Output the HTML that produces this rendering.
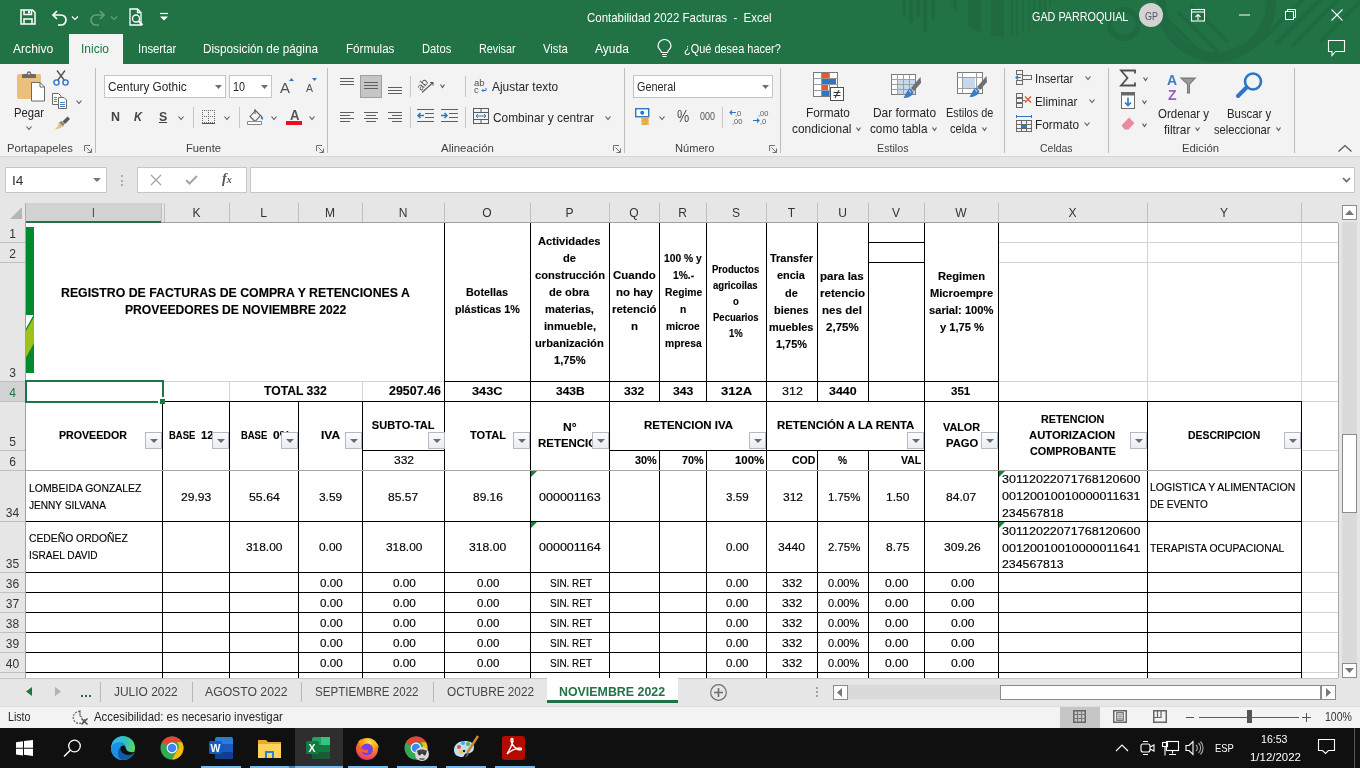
<!DOCTYPE html><html><head><meta charset="utf-8"><style>
html,body{margin:0;padding:0;} body{width:1360px;height:768px;position:relative;overflow:hidden;background:#fff;font-family:"Liberation Sans", sans-serif;}
div{box-sizing:border-box;} #root{position:absolute;left:0;top:0;width:1360px;height:768px;overflow:hidden;will-change:transform;}  svg{position:absolute;overflow:visible;}
</style></head><body><div id="root">
<div style="position:absolute;left:0px;top:0px;width:1360px;height:64px;background:#217346;"></div>
<svg style="left:0px;top:0px" width="1360" height="64" viewBox="0 0 1360 64"><defs><clipPath id="tb"><rect x="0" y="0" width="1360" height="64"/></clipPath></defs><g clip-path="url(#tb)"><g fill="#1f6a40"><rect x="902" y="0" width="4" height="15.6"/><rect x="909" y="0" width="4" height="23"/><rect x="916" y="0" width="4" height="17"/><rect x="923" y="0" width="4" height="32"/><rect x="931" y="0" width="4" height="20"/><rect x="1011" y="0" width="2" height="35.6"/><rect x="1016" y="0" width="2" height="34.4"/><rect x="1022" y="0" width="2" height="32"/><rect x="1028" y="0" width="2" height="29.4"/><rect x="1033" y="0" width="2" height="25.6"/><rect x="1039" y="0" width="2" height="21"/><rect x="1044" y="0" width="2" height="16"/><rect x="1049" y="0" width="2" height="6"/><path d="M950 0h7v13z"/><path d="M968 0h13v33l-13-7.5z"/><path d="M991 0h13v37l-13-1z"/></g><circle cx="1124" cy="24" r="14" fill="none" stroke="#1f6a40" stroke-width="6"/><circle cx="1216" cy="2" r="55" fill="none" stroke="#1f6a40" stroke-width="10"/><g stroke="#1f6a40" stroke-width="3.5"><path d="M1178 12l40 40M1170 22l36 36M1190 4l38 38"/></g><g stroke="#1f6a40" stroke-width="4"><path d="M1262 40L1310 -8M1276 44L1330 -10M1292 46L1350 -12M1320 42L1372 -10"/></g></g></svg>
<svg style="left:20px;top:9px" width="16" height="16" viewBox="0 0 16 16"><g fill="none" stroke="#fff" stroke-width="1.5"><path d="M1 1h11.5l2.5 2.5V15H1z"/><path d="M4 1v4.5h7.5V1"/><path d="M4 15v-5h8v5"/></g><rect x="8" y="2" width="2" height="2.5" fill="#fff"/></svg>
<svg style="left:50px;top:9px" width="30" height="16" viewBox="0 0 30 16"><g fill="none" stroke="#fff" stroke-width="1.7"><path d="M3 6h8a5 5 0 0 1 0 10H8"/><path d="M7 2L3 6l4 4"/></g><path d="M22 7.5l3 3 3-3" fill="none" stroke="#fff" stroke-width="1.1"/></svg>
<svg style="left:89px;top:9px" width="30" height="16" viewBox="0 0 30 16"><g fill="none" stroke="#64a07c" stroke-width="1.7"><path d="M15 6H7a5 5 0 0 0 0 10h3"/><path d="M11 2l4 4-4 4"/></g><path d="M22 7.5l3 3 3-3" fill="none" stroke="#64a07c" stroke-width="1.1"/></svg>
<svg style="left:129px;top:8px" width="18" height="18" viewBox="0 0 18 18"><g fill="none" stroke="#fff" stroke-width="1.3"><path d="M1 1h7.5l3.5 3.5V17H1z"/><path d="M8.5 1v3.5H12"/><circle cx="7" cy="10.5" r="3.5"/><path d="M9.5 13l4 4" stroke-width="2"/></g></svg>
<svg style="left:160px;top:12px" width="8" height="10" viewBox="0 0 8 10"><path d="M0 1.5h8" stroke="#fff" stroke-width="1.2"/><path d="M0 4.5h8l-4 4z" fill="#fff"/></svg>
<div style="position:absolute;left:586.70px;top:11.84px;font-size:12.35px;line-height:12.35px;font-weight:normal;font-style:normal;color:#ffffff;white-space:nowrap;transform-origin:0 0;transform:scaleX(0.9279);">Contabilidad 2022 Facturas  -  Excel</div>
<div style="position:absolute;left:1031.50px;top:10.79px;font-size:12.06px;line-height:12.06px;font-weight:normal;font-style:normal;color:#ffffff;white-space:nowrap;transform-origin:0 0;transform:scaleX(0.8960);">GAD PARROQUIAL</div>
<div style="position:absolute;left:1139px;top:3px;width:24px;height:24px;border-radius:50%;background:#d3d3d3;"></div>
<div style="position:absolute;left:1145.00px;top:10.90px;font-size:11.34px;line-height:11.34px;font-weight:normal;font-style:normal;color:#555;white-space:nowrap;transform-origin:0 0;transform:scaleX(0.7935);">GP</div>
<svg style="left:1191px;top:9px" width="14" height="13" viewBox="0 0 14 13"><g fill="none" stroke="#fff" stroke-width="1.1"><rect x="0.5" y="0.5" width="13" height="11.5"/><path d="M0.5 3h13"/><path d="M7 11V5.5M4.5 8L7 5.5 9.5 8"/></g></svg>
<svg style="left:1239px;top:14px" width="12" height="2" viewBox="0 0 12 2"><path d="M0 1h11" stroke="#fff" stroke-width="1"/></svg>
<svg style="left:1285px;top:9px" width="11" height="11" viewBox="0 0 11 11"><g fill="none" stroke="#fff" stroke-width="1"><rect x="0.5" y="2.5" width="8" height="8"/><path d="M2.5 2.5V0.5h8v8h-2"/></g></svg>
<svg style="left:1331px;top:9px" width="12" height="12" viewBox="0 0 12 12"><path d="M0.5 0.5l11 11M11.5 0.5l-11 11" stroke="#fff" stroke-width="1.1"/></svg>
<div style="position:absolute;left:69px;top:34px;width:54px;height:30px;background:#f3f3f3;"></div>
<div style="position:absolute;left:13.00px;top:43.22px;font-size:12.50px;line-height:12.50px;font-weight:normal;font-style:normal;color:#ffffff;white-space:nowrap;transform-origin:0 0;transform:scaleX(0.9667);">Archivo</div>
<div style="position:absolute;left:81.30px;top:43.22px;font-size:12.50px;line-height:12.50px;font-weight:normal;font-style:normal;color:#217346;white-space:nowrap;transform-origin:0 0;transform:scaleX(0.9593);">Inicio</div>
<div style="position:absolute;left:137.50px;top:43.22px;font-size:12.50px;line-height:12.50px;font-weight:normal;font-style:normal;color:#ffffff;white-space:nowrap;transform-origin:0 0;transform:scaleX(0.9038);">Insertar</div>
<div style="position:absolute;left:203.30px;top:43.22px;font-size:12.50px;line-height:12.50px;font-weight:normal;font-style:normal;color:#ffffff;white-space:nowrap;transform-origin:0 0;transform:scaleX(0.9402);">Disposición de página</div>
<div style="position:absolute;left:346.20px;top:43.22px;font-size:12.50px;line-height:12.50px;font-weight:normal;font-style:normal;color:#ffffff;white-space:nowrap;transform-origin:0 0;transform:scaleX(0.9291);">Fórmulas</div>
<div style="position:absolute;left:422.30px;top:43.22px;font-size:12.50px;line-height:12.50px;font-weight:normal;font-style:normal;color:#ffffff;white-space:nowrap;transform-origin:0 0;transform:scaleX(0.8972);">Datos</div>
<div style="position:absolute;left:479.30px;top:43.22px;font-size:12.50px;line-height:12.50px;font-weight:normal;font-style:normal;color:#ffffff;white-space:nowrap;transform-origin:0 0;transform:scaleX(0.8637);">Revisar</div>
<div style="position:absolute;left:542.50px;top:43.22px;font-size:12.50px;line-height:12.50px;font-weight:normal;font-style:normal;color:#ffffff;white-space:nowrap;transform-origin:0 0;transform:scaleX(0.9024);">Vista</div>
<div style="position:absolute;left:595.00px;top:43.22px;font-size:12.50px;line-height:12.50px;font-weight:normal;font-style:normal;color:#ffffff;white-space:nowrap;transform-origin:0 0;transform:scaleX(0.9617);">Ayuda</div>
<div style="position:absolute;left:684.20px;top:43.22px;font-size:12.50px;line-height:12.50px;font-weight:normal;font-style:normal;color:#ffffff;white-space:nowrap;transform-origin:0 0;transform:scaleX(0.8760);">¿Qué desea hacer?</div>
<svg style="left:657px;top:41px" width="15" height="16" viewBox="0 0 15 16"><g fill="none" stroke="#fff" stroke-width="1.2"><path d="M4.5 11.5c0-2-3.5-3.5-3.5-6.5a6.5 6.5 0 0 1 13 0c0 3-3.5 4.5-3.5 6.5z"/><path d="M5 13.5h5M5.5 15.5h4"/></g></svg>
<svg style="left:1328px;top:40px" width="18" height="17" viewBox="0 0 18 17"><path d="M0.5 0.5h16v11H7.5l-3.5 4v-4H0.5z" fill="none" stroke="#fff" stroke-width="1.1"/></svg>
<div style="position:absolute;left:0px;top:64px;width:1360px;height:92px;background:#f3f3f3;"></div>
<div style="position:absolute;left:0px;top:156px;width:1360px;height:1px;background:#d6d6d6;"></div>
<div style="position:absolute;left:95px;top:68px;width:1px;height:85px;background:#bcbcbc;"></div>
<div style="position:absolute;left:327px;top:68px;width:1px;height:85px;background:#bcbcbc;"></div>
<div style="position:absolute;left:624px;top:68px;width:1px;height:85px;background:#bcbcbc;"></div>
<div style="position:absolute;left:780px;top:68px;width:1px;height:85px;background:#bcbcbc;"></div>
<div style="position:absolute;left:1004px;top:68px;width:1px;height:85px;background:#bcbcbc;"></div>
<div style="position:absolute;left:1108px;top:68px;width:1px;height:85px;background:#bcbcbc;"></div>
<div style="position:absolute;left:1294px;top:68px;width:1px;height:85px;background:#bcbcbc;"></div>
<div style="position:absolute;left:6.75px;top:142.46px;font-size:11.63px;line-height:11.63px;font-weight:normal;font-style:normal;color:#404040;white-space:nowrap;transform-origin:0 0;transform:scaleX(0.9596);">Portapapeles</div>
<div style="position:absolute;left:185.50px;top:142.46px;font-size:11.63px;line-height:11.63px;font-weight:normal;font-style:normal;color:#404040;white-space:nowrap;transform-origin:0 0;transform:scaleX(0.9671);">Fuente</div>
<div style="position:absolute;left:441.20px;top:142.46px;font-size:11.63px;line-height:11.63px;font-weight:normal;font-style:normal;color:#404040;white-space:nowrap;transform-origin:0 0;transform:scaleX(0.9858);">Alineación</div>
<div style="position:absolute;left:674.50px;top:142.46px;font-size:11.63px;line-height:11.63px;font-weight:normal;font-style:normal;color:#404040;white-space:nowrap;transform-origin:0 0;transform:scaleX(0.9549);">Número</div>
<div style="position:absolute;left:876.70px;top:142.46px;font-size:11.63px;line-height:11.63px;font-weight:normal;font-style:normal;color:#404040;white-space:nowrap;transform-origin:0 0;transform:scaleX(0.9199);">Estilos</div>
<div style="position:absolute;left:1039.70px;top:142.46px;font-size:11.63px;line-height:11.63px;font-weight:normal;font-style:normal;color:#404040;white-space:nowrap;transform-origin:0 0;transform:scaleX(0.9008);">Celdas</div>
<div style="position:absolute;left:1182.10px;top:142.46px;font-size:11.63px;line-height:11.63px;font-weight:normal;font-style:normal;color:#404040;white-space:nowrap;transform-origin:0 0;transform:scaleX(0.9727);">Edición</div>
<svg style="left:84px;top:145px" width="8" height="8" viewBox="0 0 8 8"><g fill="none" stroke="#707070" stroke-width="1"><path d="M0.5 6V0.5H6"/><path d="M2.5 2.5l5 5M7.5 3.5v4h-4"/></g></svg>
<svg style="left:316px;top:145px" width="8" height="8" viewBox="0 0 8 8"><g fill="none" stroke="#707070" stroke-width="1"><path d="M0.5 6V0.5H6"/><path d="M2.5 2.5l5 5M7.5 3.5v4h-4"/></g></svg>
<svg style="left:613px;top:145px" width="8" height="8" viewBox="0 0 8 8"><g fill="none" stroke="#707070" stroke-width="1"><path d="M0.5 6V0.5H6"/><path d="M2.5 2.5l5 5M7.5 3.5v4h-4"/></g></svg>
<svg style="left:769px;top:145px" width="8" height="8" viewBox="0 0 8 8"><g fill="none" stroke="#707070" stroke-width="1"><path d="M0.5 6V0.5H6"/><path d="M2.5 2.5l5 5M7.5 3.5v4h-4"/></g></svg>
<svg style="left:17px;top:71px" width="30" height="31" viewBox="0 0 30 31"><rect x="0" y="3" width="24" height="25" rx="2" fill="#eac07a"/><path d="M5 4.5c0-1 .5-1.5 1.5-1.5h11c1 0 1.5 .5 1.5 1.5V7H5z" fill="#6a6a6a"/><circle cx="12" cy="2.5" r="2.2" fill="#6a6a6a"/><circle cx="12" cy="2.7" r="0.9" fill="#fff"/><path d="M14.5 11.5h8.5l4.5 4.5v14h-13z" fill="#fff" stroke="#6a6a6a" stroke-width="1"/><path d="M23 11.5v4.5h4.5" fill="none" stroke="#6a6a6a" stroke-width="1"/></svg>
<div style="position:absolute;left:14.25px;top:107.29px;font-size:12.06px;line-height:12.06px;font-weight:normal;font-style:normal;color:#262626;white-space:nowrap;transform-origin:0 0;transform:scaleX(0.9322);">Pegar</div>
<svg style="left:26px;top:126px" width="6" height="4" viewBox="0 0 6 4"><path d="M0.5 0.5l2.5 3l2.5 -3" fill="none" stroke="#555" stroke-width="1.1"/></svg>
<svg style="left:53px;top:70px" width="16" height="16" viewBox="0 0 16 16"><g fill="none" stroke="#505050" stroke-width="1.3"><path d="M4 0.5l7.5 10M12 0.5L4.5 10.5"/></g><g fill="none" stroke="#2b77c6" stroke-width="1.4"><circle cx="3.5" cy="12.5" r="2.6"/><circle cx="12.5" cy="12.5" r="2.6"/></g></svg>
<svg style="left:52px;top:93px" width="17" height="16" viewBox="0 0 17 16"><g fill="#fff" stroke="#6a6a6a" stroke-width="1"><path d="M0.5 0.5h6l2.5 2.5v8.5h-8.5z"/><path d="M6.5 4.5h5.5l2.5 2.5v8.5h-8z"/></g><path d="M2 4.5h3M2 6.5h3M2 8.5h3M8 9.5h5M8 11.5h5M8 13.5h5" stroke="#2b77c6" stroke-width="0.9"/></svg>
<svg style="left:76px;top:100px" width="6" height="4" viewBox="0 0 6 4"><path d="M0.5 0.5l2.5 3l2.5 -3" fill="none" stroke="#555" stroke-width="1.1"/></svg>
<svg style="left:53px;top:116px" width="17" height="15" viewBox="0 0 17 15"><path d="M9.5 5.5l5-5 2.5 2.5-5 5z" fill="#5a5a5a"/><path d="M1 13.5c3-1 4-4 5-7l4 4c-2 1-5 3-9 3z" fill="#e9c27d"/><path d="M6 6.5l2.5-1.5 3 3-1.5 2.5z" fill="#888"/></svg>
<div style="position:absolute;left:104px;top:75px;width:122px;height:23px;background:#fff;border:1px solid #c4c4c4;"></div>
<div style="position:absolute;left:107.50px;top:81.29px;font-size:12.35px;line-height:12.35px;font-weight:normal;font-style:normal;color:#262626;white-space:nowrap;transform-origin:0 0;transform:scaleX(0.9556);">Century Gothic</div>
<svg style="left:215px;top:85px" width="7" height="4" viewBox="0 0 7 4"><path d="M0 0h7L3.5 4z" fill="#6f6f6f"/></svg>
<div style="position:absolute;left:229px;top:75px;width:43px;height:23px;background:#fff;border:1px solid #c4c4c4;"></div>
<div style="position:absolute;left:232.50px;top:81.29px;font-size:12.35px;line-height:12.35px;font-weight:normal;font-style:normal;color:#262626;white-space:nowrap;transform-origin:0 0;transform:scaleX(0.8731);">10</div>
<svg style="left:261px;top:85px" width="7" height="4" viewBox="0 0 7 4"><path d="M0 0h7L3.5 4z" fill="#6f6f6f"/></svg>
<div style="position:absolute;left:280.00px;top:79.58px;font-size:15.26px;line-height:15.26px;font-weight:normal;font-style:normal;color:#505050;white-space:nowrap;transform-origin:0 0;transform:scaleX(0.9816);">A</div>
<svg style="left:289px;top:78px" width="5" height="3" viewBox="0 0 5 3"><path d="M0 3h5L2.5 0z" fill="#2b77c6"/></svg>
<div style="position:absolute;left:305.50px;top:83.27px;font-size:10.90px;line-height:10.90px;font-weight:normal;font-style:normal;color:#505050;white-space:nowrap;transform-origin:0 0;transform:scaleX(0.9620);">A</div>
<svg style="left:312px;top:78px" width="5" height="3" viewBox="0 0 5 3"><path d="M0 0h5L2.5 3z" fill="#2b77c6"/></svg>
<div style="position:absolute;left:110.50px;top:110.98px;font-size:12.72px;line-height:12.72px;font-weight:bold;font-style:normal;color:#444;white-space:nowrap;transform-origin:0 0;transform:scaleX(0.9795);">N</div>
<div style="position:absolute;left:133.75px;top:110.98px;font-size:12.72px;line-height:12.72px;font-weight:bold;font-style:italic;color:#444;white-space:nowrap;transform-origin:0 0;transform:scaleX(0.8764);">K</div>
<div style="position:absolute;left:158.75px;top:110.98px;font-size:12.72px;line-height:12.72px;font-weight:bold;font-style:normal;color:#444;white-space:nowrap;transform-origin:0 0;transform:scaleX(0.9718);">S</div>
<div style="position:absolute;left:159px;top:122px;width:8px;height:1px;background:#444;"></div>
<svg style="left:178px;top:116px" width="6" height="4" viewBox="0 0 6 4"><path d="M0.5 0.5l2.5 3l2.5 -3" fill="none" stroke="#555" stroke-width="1.1"/></svg>
<div style="position:absolute;left:193px;top:107px;width:1px;height:21px;background:#c8c8c8;"></div>
<svg style="left:202px;top:110px" width="14" height="14" viewBox="0 0 14 14"><g fill="#666"><rect x="0" y="0" width="1" height="1"/><rect x="2" y="0" width="1" height="1"/><rect x="4" y="0" width="1" height="1"/><rect x="6" y="0" width="1" height="1"/><rect x="8" y="0" width="1" height="1"/><rect x="10" y="0" width="1" height="1"/><rect x="12" y="0" width="1" height="1"/><rect x="0" y="6" width="1" height="1"/><rect x="2" y="6" width="1" height="1"/><rect x="4" y="6" width="1" height="1"/><rect x="6" y="6" width="1" height="1"/><rect x="8" y="6" width="1" height="1"/><rect x="10" y="6" width="1" height="1"/><rect x="12" y="6" width="1" height="1"/><rect x="0" y="12" width="1" height="1"/><rect x="2" y="12" width="1" height="1"/><rect x="4" y="12" width="1" height="1"/><rect x="6" y="12" width="1" height="1"/><rect x="8" y="12" width="1" height="1"/><rect x="10" y="12" width="1" height="1"/><rect x="12" y="12" width="1" height="1"/><rect x="0" y="2" width="1" height="1"/><rect x="0" y="4" width="1" height="1"/><rect x="0" y="6" width="1" height="1"/><rect x="0" y="8" width="1" height="1"/><rect x="0" y="10" width="1" height="1"/><rect x="6" y="2" width="1" height="1"/><rect x="6" y="4" width="1" height="1"/><rect x="6" y="6" width="1" height="1"/><rect x="6" y="8" width="1" height="1"/><rect x="6" y="10" width="1" height="1"/><rect x="12" y="2" width="1" height="1"/><rect x="12" y="4" width="1" height="1"/><rect x="12" y="6" width="1" height="1"/><rect x="12" y="8" width="1" height="1"/><rect x="12" y="10" width="1" height="1"/></g><rect x="0" y="13" width="13" height="1" fill="#555"/></svg>
<svg style="left:224px;top:116px" width="6" height="4" viewBox="0 0 6 4"><path d="M0.5 0.5l2.5 3l2.5 -3" fill="none" stroke="#555" stroke-width="1.1"/></svg>
<div style="position:absolute;left:239px;top:107px;width:1px;height:21px;background:#c8c8c8;"></div>
<svg style="left:247px;top:108px" width="17" height="17" viewBox="0 0 17 17"><g fill="none" stroke="#5a5a5a" stroke-width="1.1"><path d="M3 8.5l5.5-6 5 5-5.5 6z"/><path d="M8 1v5"/></g><path d="M0.5 13.5h14v3h-14z" fill="#fff" stroke="#888"/><path d="M14 7c1.5 1.5 2.5 3 2 4.5-1.5 .5-2.5-.5-2-4.5z" fill="#2b77c6"/></svg>
<svg style="left:271px;top:116px" width="6" height="4" viewBox="0 0 6 4"><path d="M0.5 0.5l2.5 3l2.5 -3" fill="none" stroke="#555" stroke-width="1.1"/></svg>
<div style="position:absolute;left:289.50px;top:109.31px;font-size:13.81px;line-height:13.81px;font-weight:bold;font-style:normal;color:#555;white-space:nowrap;transform-origin:0 0;transform:scaleX(0.9522);">A</div>
<div style="position:absolute;left:286px;top:121px;width:16px;height:4px;background:#e81123;"></div>
<svg style="left:309px;top:116px" width="6" height="4" viewBox="0 0 6 4"><path d="M0.5 0.5l2.5 3l2.5 -3" fill="none" stroke="#555" stroke-width="1.1"/></svg>
<div style="position:absolute;left:340px;top:78px;width:14px;height:1px;background:#5f5f5f;"></div>
<div style="position:absolute;left:340px;top:81px;width:14px;height:1px;background:#5f5f5f;"></div>
<div style="position:absolute;left:340px;top:84px;width:14px;height:1px;background:#5f5f5f;"></div>
<div style="position:absolute;left:360px;top:75px;width:22px;height:23px;background:#c5c5c5;border:1px solid #a0a0a0;"></div>
<div style="position:absolute;left:364px;top:82px;width:14px;height:1px;background:#5f5f5f;"></div>
<div style="position:absolute;left:364px;top:85px;width:14px;height:1px;background:#5f5f5f;"></div>
<div style="position:absolute;left:364px;top:88px;width:14px;height:1px;background:#5f5f5f;"></div>
<div style="position:absolute;left:388px;top:87px;width:14px;height:1px;background:#5f5f5f;"></div>
<div style="position:absolute;left:388px;top:90px;width:14px;height:1px;background:#5f5f5f;"></div>
<div style="position:absolute;left:388px;top:93px;width:14px;height:1px;background:#5f5f5f;"></div>
<div style="position:absolute;left:410px;top:76px;width:1px;height:21px;background:#c8c8c8;"></div>
<svg style="left:417px;top:78px" width="18" height="15" viewBox="0 0 18 15"><text x="-1" y="10" font-size="10.5" fill="#505050" font-family="Liberation Sans" transform="rotate(-50 5 6)">ab</text><path d="M5 14.5l11-10M13 4.5h3v3" fill="none" stroke="#5a5a5a" stroke-width="1.1"/></svg>
<svg style="left:440px;top:84px" width="5" height="4" viewBox="0 0 5 4"><path d="M0.5 0.5l2.0 3l2.0 -3" fill="none" stroke="#555" stroke-width="1.1"/></svg>
<div style="position:absolute;left:465px;top:76px;width:1px;height:21px;background:#c8c8c8;"></div>
<svg style="left:474px;top:79px" width="14" height="14" viewBox="0 0 14 14"><text x="0" y="7" font-size="9.5" fill="#505050" font-family="Liberation Sans">ab</text><text x="0" y="14" font-size="9.5" fill="#505050" font-family="Liberation Sans">c</text><path d="M12 9v2.5H8M9.5 10L8 11.5l1.5 1.5" fill="none" stroke="#2b77c6" stroke-width="1"/></svg>
<div style="position:absolute;left:492.20px;top:81.04px;font-size:12.35px;line-height:12.35px;font-weight:normal;font-style:normal;color:#262626;white-space:nowrap;transform-origin:0 0;transform:scaleX(0.9642);">Ajustar texto</div>
<div style="position:absolute;left:340px;top:112px;width:14px;height:1px;background:#5f5f5f;"></div>
<div style="position:absolute;left:340px;top:115px;width:10px;height:1px;background:#5f5f5f;"></div>
<div style="position:absolute;left:340px;top:118px;width:14px;height:1px;background:#5f5f5f;"></div>
<div style="position:absolute;left:340px;top:121px;width:10px;height:1px;background:#5f5f5f;"></div>
<div style="position:absolute;left:364px;top:112px;width:14px;height:1px;background:#5f5f5f;"></div>
<div style="position:absolute;left:366px;top:115px;width:10px;height:1px;background:#5f5f5f;"></div>
<div style="position:absolute;left:364px;top:118px;width:14px;height:1px;background:#5f5f5f;"></div>
<div style="position:absolute;left:366px;top:121px;width:10px;height:1px;background:#5f5f5f;"></div>
<div style="position:absolute;left:388px;top:112px;width:14px;height:1px;background:#5f5f5f;"></div>
<div style="position:absolute;left:392px;top:115px;width:10px;height:1px;background:#5f5f5f;"></div>
<div style="position:absolute;left:388px;top:118px;width:14px;height:1px;background:#5f5f5f;"></div>
<div style="position:absolute;left:392px;top:121px;width:10px;height:1px;background:#5f5f5f;"></div>
<div style="position:absolute;left:410px;top:107px;width:1px;height:21px;background:#c8c8c8;"></div>
<svg style="left:417px;top:109px" width="18" height="14" viewBox="0 0 18 14"><path d="M0 0.5h17M8 4.5h9M8 8.5h9M0 12.5h17" stroke="#5f5f5f" stroke-width="1"/><path d="M1 6.5h6M3.5 4L1 6.5 3.5 9" fill="none" stroke="#2b77c6" stroke-width="1.5"/></svg>
<svg style="left:441px;top:109px" width="18" height="14" viewBox="0 0 18 14"><path d="M0 0.5h17M8 4.5h9M8 8.5h9M0 12.5h17" stroke="#5f5f5f" stroke-width="1"/><path d="M0 6.5h6M3.5 4L6 6.5 3.5 9" fill="none" stroke="#2b77c6" stroke-width="1.5"/></svg>
<div style="position:absolute;left:465px;top:107px;width:1px;height:21px;background:#c8c8c8;"></div>
<svg style="left:473px;top:108px" width="16" height="16" viewBox="0 0 16 16"><g fill="none" stroke="#5a5a5a" stroke-width="1"><rect x="0.5" y="0.5" width="15" height="15"/><path d="M0.5 4.5h15M0.5 11.5h15M8 0.5v4M8 11.5v4"/></g><path d="M3 8h10M5 6L3 8l2 2M11 6l2 2-2 2" fill="none" stroke="#2b77c6" stroke-width="1"/></svg>
<div style="position:absolute;left:493.00px;top:112.04px;font-size:12.35px;line-height:12.35px;font-weight:normal;font-style:normal;color:#262626;white-space:nowrap;transform-origin:0 0;transform:scaleX(0.9624);">Combinar y centrar</div>
<svg style="left:605px;top:116px" width="6" height="4" viewBox="0 0 6 4"><path d="M0.5 0.5l2.5 3l2.5 -3" fill="none" stroke="#555" stroke-width="1.1"/></svg>
<div style="position:absolute;left:633px;top:75px;width:140px;height:23px;background:#fff;border:1px solid #c4c4c4;"></div>
<div style="position:absolute;left:636.60px;top:81.34px;font-size:12.35px;line-height:12.35px;font-weight:normal;font-style:normal;color:#262626;white-space:nowrap;transform-origin:0 0;transform:scaleX(0.8805);">General</div>
<svg style="left:762px;top:85px" width="7" height="4" viewBox="0 0 7 4"><path d="M0 0h7L3.5 4z" fill="#6f6f6f"/></svg>
<svg style="left:635px;top:108px" width="18" height="17" viewBox="0 0 18 17"><rect x="0.7" y="0.7" width="13" height="8" fill="#fff" stroke="#2b77c6" stroke-width="1.4"/><circle cx="7.2" cy="4.7" r="2" fill="#2b77c6"/><g fill="#e6ab45"><ellipse cx="10" cy="10.5" rx="4" ry="1.6"/><ellipse cx="10" cy="13" rx="4" ry="1.6"/><ellipse cx="10" cy="15.5" rx="4" ry="1.6"/></g></svg>
<svg style="left:659px;top:116px" width="6" height="4" viewBox="0 0 6 4"><path d="M0.5 0.5l2.5 3l2.5 -3" fill="none" stroke="#555" stroke-width="1.1"/></svg>
<div style="position:absolute;left:677.40px;top:109.35px;font-size:16.72px;line-height:16.72px;font-weight:normal;font-style:normal;color:#505050;white-space:nowrap;transform-origin:0 0;transform:scaleX(0.8268);">%</div>
<div style="position:absolute;left:699.70px;top:112.09px;font-size:10.17px;line-height:10.17px;font-weight:normal;font-style:normal;color:#505050;white-space:nowrap;transform-origin:0 0;transform:scaleX(0.8782);">000</div>
<div style="position:absolute;left:722px;top:107px;width:1px;height:21px;background:#c8c8c8;"></div>
<svg style="left:729px;top:109px" width="16" height="15" viewBox="0 0 16 15"><text x="6" y="6.5" font-size="7.5" fill="#5a5a5a" font-family="Liberation Sans">,0</text><text x="3" y="14.5" font-size="7.5" fill="#5a5a5a" font-family="Liberation Sans">,00</text><path d="M7 3.5H1M3 1.5l-2 2 2 2" fill="none" stroke="#2b77c6" stroke-width="1.1"/></svg>
<svg style="left:753px;top:109px" width="16" height="15" viewBox="0 0 16 15"><text x="5" y="6.5" font-size="7.5" fill="#5a5a5a" font-family="Liberation Sans">,00</text><text x="7" y="14.5" font-size="7.5" fill="#5a5a5a" font-family="Liberation Sans">,0</text><path d="M0 11.5h6M4 9.5l2 2-2 2" fill="none" stroke="#2b77c6" stroke-width="1.1"/></svg>
<svg style="left:813px;top:72px" width="32" height="30" viewBox="0 0 32 30"><rect x="0.5" y="0.5" width="24" height="24" fill="#fff" stroke="#7a7a7a"/><path d="M0.5 6.5h24M0.5 12.5h24M0.5 18.5h24M8.5 0.5v24M16.5 0.5v24" stroke="#9a9a9a" stroke-width="1"/><rect x="9" y="1" width="7" height="5" fill="#e35a2c"/><rect x="9" y="7" width="14" height="5" fill="#2b77c6"/><rect x="9" y="13" width="6" height="5" fill="#e35a2c"/><rect x="9" y="19" width="7" height="5" fill="#2b77c6"/><rect x="17.5" y="15.5" width="13" height="13" fill="#fff" stroke="#505050"/><path d="M20.5 20.5h7M20.5 23.5h7M26 18l-4 8" stroke="#333" stroke-width="1.1"/></svg>
<div style="position:absolute;left:805.50px;top:107.34px;font-size:12.35px;line-height:12.35px;font-weight:normal;font-style:normal;color:#262626;white-space:nowrap;transform-origin:0 0;transform:scaleX(0.9546);">Formato</div>
<div style="position:absolute;left:791.50px;top:123.14px;font-size:12.35px;line-height:12.35px;font-weight:normal;font-style:normal;color:#262626;white-space:nowrap;transform-origin:0 0;transform:scaleX(0.9627);">condicional</div>
<svg style="left:856px;top:127px" width="5" height="4" viewBox="0 0 5 4"><path d="M0.5 0.5l2.0 3l2.0 -3" fill="none" stroke="#555" stroke-width="1.1"/></svg>
<svg style="left:891px;top:73px" width="31" height="29" viewBox="0 0 31 29"><rect x="0.5" y="1.5" width="24" height="20" fill="#fff" stroke="#7a7a7a"/><rect x="7" y="7" width="17" height="14" fill="#c5d8ee"/><path d="M0.5 6.5h24M0.5 11.5h24M0.5 16.5h24M6.5 1.5v20M12.5 1.5v20M18.5 1.5v20" stroke="#a0a0a0" stroke-width="1"/><path d="M29.5 4l0.5 6-7 8-3-3z" fill="#707070"/><path d="M19 15.5l3.5 3.5c-1 4-5 6-10 6 2-3 3.5-8 6.5-9.5z" fill="#3d7cc9"/><path d="M18 17.5c1 .5 1.5 1 1.5 2" stroke="#fff" stroke-width="1" fill="none"/></svg>
<div style="position:absolute;left:873.20px;top:107.34px;font-size:12.35px;line-height:12.35px;font-weight:normal;font-style:normal;color:#262626;white-space:nowrap;transform-origin:0 0;transform:scaleX(0.9673);">Dar formato</div>
<div style="position:absolute;left:869.50px;top:123.14px;font-size:12.35px;line-height:12.35px;font-weight:normal;font-style:normal;color:#262626;white-space:nowrap;transform-origin:0 0;transform:scaleX(0.9513);">como tabla</div>
<svg style="left:932px;top:127px" width="5" height="4" viewBox="0 0 5 4"><path d="M0.5 0.5l2.0 3l2.0 -3" fill="none" stroke="#555" stroke-width="1.1"/></svg>
<svg style="left:957px;top:72px" width="31" height="29" viewBox="0 0 31 29"><rect x="0.5" y="0.5" width="25" height="21" fill="#fff" stroke="#7a7a7a"/><rect x="5" y="5" width="13" height="12" fill="#c5d8ee"/><path d="M0.5 5.5h25M0.5 16.5h25M5.5 0.5v21M19.5 0.5v21" stroke="#a0a0a0" stroke-width="1"/><path d="M29.5 4l0.5 6-7 8-3-3z" fill="#707070"/><path d="M19 15.5l3.5 3.5c-1 4-5 6-10 6 2-3 3.5-8 6.5-9.5z" fill="#3d7cc9"/><path d="M18 17.5c1 .5 1.5 1 1.5 2" stroke="#fff" stroke-width="1" fill="none"/></svg>
<div style="position:absolute;left:945.50px;top:107.34px;font-size:12.35px;line-height:12.35px;font-weight:normal;font-style:normal;color:#262626;white-space:nowrap;transform-origin:0 0;transform:scaleX(0.8832);">Estilos de</div>
<div style="position:absolute;left:950.40px;top:123.14px;font-size:12.35px;line-height:12.35px;font-weight:normal;font-style:normal;color:#262626;white-space:nowrap;transform-origin:0 0;transform:scaleX(0.8999);">celda</div>
<svg style="left:982px;top:127px" width="5" height="4" viewBox="0 0 5 4"><path d="M0.5 0.5l2.0 3l2.0 -3" fill="none" stroke="#555" stroke-width="1.1"/></svg>
<svg style="left:1016px;top:70px" width="16" height="16" viewBox="0 0 16 16"><g fill="none" stroke="#6a6a6a" stroke-width="1"><rect x="0.5" y="0.5" width="6" height="4"/><rect x="0.5" y="10.5" width="6" height="4"/><rect x="6.5" y="5.5" width="9" height="4"/></g><path d="M0 7.5h5M2 5.5l-2 2 2 2" fill="none" stroke="#2b77c6" stroke-width="1.2"/></svg>
<div style="position:absolute;left:1035.20px;top:73.24px;font-size:12.35px;line-height:12.35px;font-weight:normal;font-style:normal;color:#262626;white-space:nowrap;transform-origin:0 0;transform:scaleX(0.9169);">Insertar</div>
<svg style="left:1085px;top:76px" width="6" height="4" viewBox="0 0 6 4"><path d="M0.5 0.5l2.5 3l2.5 -3" fill="none" stroke="#555" stroke-width="1.1"/></svg>
<svg style="left:1016px;top:93px" width="16" height="16" viewBox="0 0 16 16"><g fill="none" stroke="#6a6a6a" stroke-width="1"><rect x="0.5" y="0.5" width="6" height="4"/><rect x="0.5" y="10.5" width="6" height="4"/><rect x="0.5" y="5.5" width="6" height="4"/><path d="M6.5 7.5h3"/></g><path d="M9 3.5l6 6M15 3.5l-6 6" stroke="#e35a2c" stroke-width="1.4"/></svg>
<div style="position:absolute;left:1035.20px;top:96.24px;font-size:12.35px;line-height:12.35px;font-weight:normal;font-style:normal;color:#262626;white-space:nowrap;transform-origin:0 0;transform:scaleX(0.9500);">Eliminar</div>
<svg style="left:1089px;top:99px" width="6" height="4" viewBox="0 0 6 4"><path d="M0.5 0.5l2.5 3l2.5 -3" fill="none" stroke="#555" stroke-width="1.1"/></svg>
<svg style="left:1016px;top:115px" width="16" height="17" viewBox="0 0 16 17"><path d="M0.5 1.5h15M0.5 0v3M15.5 0v3" stroke="#2b77c6" stroke-width="1"/><g fill="none" stroke="#6a6a6a" stroke-width="1"><rect x="0.5" y="5.5" width="15" height="11"/><path d="M0.5 9.5h15M0.5 13.5h15M5.5 5.5v11M10.5 5.5v11"/></g><rect x="6" y="10" width="4" height="3" fill="#2b77c6"/></svg>
<div style="position:absolute;left:1035.20px;top:119.04px;font-size:12.35px;line-height:12.35px;font-weight:normal;font-style:normal;color:#262626;white-space:nowrap;transform-origin:0 0;transform:scaleX(0.9611);">Formato</div>
<svg style="left:1084px;top:122px" width="6" height="4" viewBox="0 0 6 4"><path d="M0.5 0.5l2.5 3l2.5 -3" fill="none" stroke="#555" stroke-width="1.1"/></svg>
<svg style="left:1120px;top:70px" width="16" height="16" viewBox="0 0 16 16"><path d="M15 3.5V0.5H1l6.5 7.5L1 15.5h14v-3" fill="none" stroke="#505050" stroke-width="1.8"/></svg>
<svg style="left:1143px;top:77px" width="5" height="4" viewBox="0 0 5 4"><path d="M0.5 0.5l2.0 3l2.0 -3" fill="none" stroke="#555" stroke-width="1.1"/></svg>
<svg style="left:1121px;top:92px" width="14" height="17" viewBox="0 0 14 17"><rect x="0.5" y="0.5" width="13" height="16" fill="#fff" stroke="#6a6a6a"/><rect x="0.5" y="0.5" width="13" height="3" fill="#6a6a6a"/><path d="M7 5.5v8M4 10.5l3 3 3-3" fill="none" stroke="#2b77c6" stroke-width="1.6"/></svg>
<svg style="left:1142px;top:100px" width="5" height="4" viewBox="0 0 5 4"><path d="M0.5 0.5l2.0 3l2.0 -3" fill="none" stroke="#555" stroke-width="1.1"/></svg>
<svg style="left:1121px;top:117px" width="14" height="13" viewBox="0 0 14 13"><path d="M0.5 8.5l7.5-8 5.5 5.5-6 6.5H3.5z" fill="#ec8b9f"/></svg>
<svg style="left:1142px;top:123px" width="5" height="4" viewBox="0 0 5 4"><path d="M0.5 0.5l2.0 3l2.0 -3" fill="none" stroke="#555" stroke-width="1.1"/></svg>
<svg style="left:1167px;top:72px" width="31" height="28" viewBox="0 0 31 28"><text x="0" y="13" font-size="14" font-weight="bold" fill="#3d7cc9" font-family="Liberation Sans">A</text><text x="1" y="28" font-size="14" font-weight="bold" fill="#9a5fc9" font-family="Liberation Sans">Z</text><path d="M12.5 5.5h17l-6.5 7v9h-3v-9z" fill="#7a7a7a"/><path d="M15.5 7h11l-4.5 5v8h-1v-8z" fill="#9a9a9a"/></svg>
<div style="position:absolute;left:1158.00px;top:107.64px;font-size:12.35px;line-height:12.35px;font-weight:normal;font-style:normal;color:#262626;white-space:nowrap;transform-origin:0 0;transform:scaleX(0.9300);">Ordenar y</div>
<div style="position:absolute;left:1163.60px;top:123.54px;font-size:12.35px;line-height:12.35px;font-weight:normal;font-style:normal;color:#262626;white-space:nowrap;transform-origin:0 0;transform:scaleX(0.9615);">filtrar</div>
<svg style="left:1195px;top:127px" width="5" height="4" viewBox="0 0 5 4"><path d="M0.5 0.5l2.0 3l2.0 -3" fill="none" stroke="#555" stroke-width="1.1"/></svg>
<svg style="left:1235px;top:72px" width="28" height="27" viewBox="0 0 28 27"><circle cx="18" cy="9.5" r="8" fill="none" stroke="#2b77c6" stroke-width="2.6"/><path d="M11.5 15.5L3 24" stroke="#2b77c6" stroke-width="4" stroke-linecap="round"/></svg>
<div style="position:absolute;left:1227.00px;top:107.64px;font-size:12.35px;line-height:12.35px;font-weight:normal;font-style:normal;color:#262626;white-space:nowrap;transform-origin:0 0;transform:scaleX(0.9218);">Buscar y</div>
<div style="position:absolute;left:1214.40px;top:123.54px;font-size:12.35px;line-height:12.35px;font-weight:normal;font-style:normal;color:#262626;white-space:nowrap;transform-origin:0 0;transform:scaleX(0.9058);">seleccionar</div>
<svg style="left:1276px;top:127px" width="5" height="4" viewBox="0 0 5 4"><path d="M0.5 0.5l2.0 3l2.0 -3" fill="none" stroke="#555" stroke-width="1.1"/></svg>
<svg style="left:1338px;top:145px" width="14" height="7" viewBox="0 0 14 7"><path d="M0.5 6.5l6.5-6 6.5 6" fill="none" stroke="#555" stroke-width="1.2"/></svg>
<div style="position:absolute;left:0px;top:157px;width:1360px;height:46px;background:#e6e6e6;"></div>
<div style="position:absolute;left:5px;top:167px;width:102px;height:26px;background:#fff;border:1px solid #c6c6c6;"></div>
<div style="position:absolute;left:12.00px;top:174.79px;font-size:12.06px;line-height:12.06px;font-weight:normal;font-style:normal;color:#333;white-space:nowrap;transform-origin:0 0;transform:scaleX(1.1416);">I4</div>
<svg style="left:93px;top:178px" width="8" height="4" viewBox="0 0 8 4"><path d="M0 0h8L4 4z" fill="#777"/></svg>
<div style="position:absolute;left:121px;top:175px;width:2px;height:2px;background:#9a9a9a;border-radius:1px;"></div>
<div style="position:absolute;left:121px;top:179.5px;width:2px;height:2px;background:#9a9a9a;border-radius:1px;"></div>
<div style="position:absolute;left:121px;top:184px;width:2px;height:2px;background:#9a9a9a;border-radius:1px;"></div>
<div style="position:absolute;left:137px;top:167px;width:110px;height:26px;background:#fff;border:1px solid #c6c6c6;"></div>
<svg style="left:150px;top:174px" width="12" height="12" viewBox="0 0 12 12"><path d="M1 1l10 10M11 1L1 11" stroke="#a6a6a6" stroke-width="1.3"/></svg>
<svg style="left:185px;top:175px" width="13" height="10" viewBox="0 0 13 10"><path d="M1 5l3.5 3.5L12 1" fill="none" stroke="#a6a6a6" stroke-width="2"/></svg>
<div style="position:absolute;left:222px;top:172px;font-family:'Liberation Serif',serif;font-style:italic;font-weight:bold;color:#555;font-size:14px;line-height:14px;white-space:nowrap">f<span style="font-size:10px">x</span></div>
<div style="position:absolute;left:250px;top:167px;width:1105px;height:26px;background:#fff;border:1px solid #c6c6c6;"></div>
<svg style="left:1342px;top:177px" width="9" height="6" viewBox="0 0 9 6"><path d="M1 1l3.5 3.5L8 1" fill="none" stroke="#6a6a6a" stroke-width="1.7"/></svg>
<div style="position:absolute;left:0px;top:203px;width:1338px;height:20px;background:#e6e6e6;"></div>
<svg style="left:10px;top:207px" width="12" height="12" viewBox="0 0 12 12"><path d="M12 0v12H0z" fill="#b6b6b6"/></svg>
<div style="position:absolute;left:26px;top:203px;width:135px;height:19px;background:#d2d2d2;"></div>
<div style="position:absolute;left:25px;top:203px;width:1px;height:20px;background:#ababab;"></div>
<div style="position:absolute;left:91.83px;top:207.29px;font-size:12.06px;line-height:12.06px;font-weight:normal;font-style:normal;color:#217346;white-space:nowrap;transform-origin:0 0;transform:scaleX(1.0000);">I</div>
<div style="position:absolute;left:192.47px;top:207.29px;font-size:12.06px;line-height:12.06px;font-weight:normal;font-style:normal;color:#333;white-space:nowrap;transform-origin:0 0;transform:scaleX(1.0000);">K</div>
<div style="position:absolute;left:260.15px;top:207.29px;font-size:12.06px;line-height:12.06px;font-weight:normal;font-style:normal;color:#333;white-space:nowrap;transform-origin:0 0;transform:scaleX(1.0000);">L</div>
<div style="position:absolute;left:324.98px;top:207.29px;font-size:12.06px;line-height:12.06px;font-weight:normal;font-style:normal;color:#333;white-space:nowrap;transform-origin:0 0;transform:scaleX(1.0000);">M</div>
<div style="position:absolute;left:398.64px;top:207.29px;font-size:12.06px;line-height:12.06px;font-weight:normal;font-style:normal;color:#333;white-space:nowrap;transform-origin:0 0;transform:scaleX(1.0000);">N</div>
<div style="position:absolute;left:482.31px;top:207.29px;font-size:12.06px;line-height:12.06px;font-weight:normal;font-style:normal;color:#333;white-space:nowrap;transform-origin:0 0;transform:scaleX(1.0000);">O</div>
<div style="position:absolute;left:565.47px;top:207.29px;font-size:12.06px;line-height:12.06px;font-weight:normal;font-style:normal;color:#333;white-space:nowrap;transform-origin:0 0;transform:scaleX(1.0000);">P</div>
<div style="position:absolute;left:629.31px;top:207.29px;font-size:12.06px;line-height:12.06px;font-weight:normal;font-style:normal;color:#333;white-space:nowrap;transform-origin:0 0;transform:scaleX(1.0000);">Q</div>
<div style="position:absolute;left:678.14px;top:207.29px;font-size:12.06px;line-height:12.06px;font-weight:normal;font-style:normal;color:#333;white-space:nowrap;transform-origin:0 0;transform:scaleX(1.0000);">R</div>
<div style="position:absolute;left:731.97px;top:207.29px;font-size:12.06px;line-height:12.06px;font-weight:normal;font-style:normal;color:#333;white-space:nowrap;transform-origin:0 0;transform:scaleX(1.0000);">S</div>
<div style="position:absolute;left:787.82px;top:207.29px;font-size:12.06px;line-height:12.06px;font-weight:normal;font-style:normal;color:#333;white-space:nowrap;transform-origin:0 0;transform:scaleX(1.0000);">T</div>
<div style="position:absolute;left:838.14px;top:207.29px;font-size:12.06px;line-height:12.06px;font-weight:normal;font-style:normal;color:#333;white-space:nowrap;transform-origin:0 0;transform:scaleX(1.0000);">U</div>
<div style="position:absolute;left:891.97px;top:207.29px;font-size:12.06px;line-height:12.06px;font-weight:normal;font-style:normal;color:#333;white-space:nowrap;transform-origin:0 0;transform:scaleX(1.0000);">V</div>
<div style="position:absolute;left:955.30px;top:207.29px;font-size:12.06px;line-height:12.06px;font-weight:normal;font-style:normal;color:#333;white-space:nowrap;transform-origin:0 0;transform:scaleX(1.0000);">W</div>
<div style="position:absolute;left:1068.47px;top:207.29px;font-size:12.06px;line-height:12.06px;font-weight:normal;font-style:normal;color:#333;white-space:nowrap;transform-origin:0 0;transform:scaleX(1.0000);">X</div>
<div style="position:absolute;left:1219.97px;top:207.29px;font-size:12.06px;line-height:12.06px;font-weight:normal;font-style:normal;color:#333;white-space:nowrap;transform-origin:0 0;transform:scaleX(1.0000);">Y</div>
<div style="position:absolute;left:161px;top:203px;width:1px;height:19px;background:#c0c0c0;"></div>
<div style="position:absolute;left:164px;top:203px;width:1px;height:19px;background:#c0c0c0;"></div>
<div style="position:absolute;left:229px;top:203px;width:1px;height:19px;background:#c0c0c0;"></div>
<div style="position:absolute;left:298px;top:203px;width:1px;height:19px;background:#c0c0c0;"></div>
<div style="position:absolute;left:362px;top:203px;width:1px;height:19px;background:#c0c0c0;"></div>
<div style="position:absolute;left:444px;top:203px;width:1px;height:19px;background:#c0c0c0;"></div>
<div style="position:absolute;left:530px;top:203px;width:1px;height:19px;background:#c0c0c0;"></div>
<div style="position:absolute;left:609px;top:203px;width:1px;height:19px;background:#c0c0c0;"></div>
<div style="position:absolute;left:659px;top:203px;width:1px;height:19px;background:#c0c0c0;"></div>
<div style="position:absolute;left:706px;top:203px;width:1px;height:19px;background:#c0c0c0;"></div>
<div style="position:absolute;left:766px;top:203px;width:1px;height:19px;background:#c0c0c0;"></div>
<div style="position:absolute;left:817px;top:203px;width:1px;height:19px;background:#c0c0c0;"></div>
<div style="position:absolute;left:868px;top:203px;width:1px;height:19px;background:#c0c0c0;"></div>
<div style="position:absolute;left:924px;top:203px;width:1px;height:19px;background:#c0c0c0;"></div>
<div style="position:absolute;left:998px;top:203px;width:1px;height:19px;background:#c0c0c0;"></div>
<div style="position:absolute;left:1147px;top:203px;width:1px;height:19px;background:#c0c0c0;"></div>
<div style="position:absolute;left:1301px;top:203px;width:1px;height:19px;background:#c0c0c0;"></div>
<div style="position:absolute;left:26px;top:222px;width:1312px;height:1px;background:#a0a0a0;"></div>
<div style="position:absolute;left:26px;top:221px;width:135px;height:2px;background:#217346;"></div>
<div style="position:absolute;left:26px;top:223px;width:1312px;height:455px;background:#fff;"></div>
<div style="position:absolute;left:0px;top:223px;width:25px;height:455px;background:#e6e6e6;"></div>
<div style="position:absolute;left:25px;top:223px;width:1px;height:455px;background:#a0a0a0;"></div>
<div style="position:absolute;left:0px;top:382px;width:25px;height:19px;background:#d2d2d2;"></div>
<div style="position:absolute;left:0px;top:242px;width:25px;height:1px;background:#c0c0c0;"></div>
<div style="position:absolute;left:9.15px;top:227.79px;font-size:12.06px;line-height:12.06px;font-weight:normal;font-style:normal;color:#333;white-space:nowrap;transform-origin:0 0;transform:scaleX(1.0000);">1</div>
<div style="position:absolute;left:0px;top:262px;width:25px;height:1px;background:#c0c0c0;"></div>
<div style="position:absolute;left:9.15px;top:247.79px;font-size:12.06px;line-height:12.06px;font-weight:normal;font-style:normal;color:#333;white-space:nowrap;transform-origin:0 0;transform:scaleX(1.0000);">2</div>
<div style="position:absolute;left:0px;top:381px;width:25px;height:1px;background:#c0c0c0;"></div>
<div style="position:absolute;left:9.15px;top:366.79px;font-size:12.06px;line-height:12.06px;font-weight:normal;font-style:normal;color:#333;white-space:nowrap;transform-origin:0 0;transform:scaleX(1.0000);">3</div>
<div style="position:absolute;left:0px;top:401px;width:25px;height:1px;background:#c0c0c0;"></div>
<div style="position:absolute;left:9.15px;top:386.79px;font-size:12.06px;line-height:12.06px;font-weight:normal;font-style:normal;color:#217346;white-space:nowrap;transform-origin:0 0;transform:scaleX(1.0000);">4</div>
<div style="position:absolute;left:0px;top:450px;width:25px;height:1px;background:#c0c0c0;"></div>
<div style="position:absolute;left:9.15px;top:435.79px;font-size:12.06px;line-height:12.06px;font-weight:normal;font-style:normal;color:#333;white-space:nowrap;transform-origin:0 0;transform:scaleX(1.0000);">5</div>
<div style="position:absolute;left:0px;top:470px;width:25px;height:1px;background:#c0c0c0;"></div>
<div style="position:absolute;left:9.15px;top:455.79px;font-size:12.06px;line-height:12.06px;font-weight:normal;font-style:normal;color:#333;white-space:nowrap;transform-origin:0 0;transform:scaleX(1.0000);">6</div>
<div style="position:absolute;left:0px;top:521px;width:25px;height:1px;background:#c0c0c0;"></div>
<div style="position:absolute;left:5.79px;top:506.79px;font-size:12.06px;line-height:12.06px;font-weight:normal;font-style:normal;color:#333;white-space:nowrap;transform-origin:0 0;transform:scaleX(1.0000);">34</div>
<div style="position:absolute;left:0px;top:572px;width:25px;height:1px;background:#c0c0c0;"></div>
<div style="position:absolute;left:5.79px;top:557.79px;font-size:12.06px;line-height:12.06px;font-weight:normal;font-style:normal;color:#333;white-space:nowrap;transform-origin:0 0;transform:scaleX(1.0000);">35</div>
<div style="position:absolute;left:0px;top:592px;width:25px;height:1px;background:#c0c0c0;"></div>
<div style="position:absolute;left:5.79px;top:577.79px;font-size:12.06px;line-height:12.06px;font-weight:normal;font-style:normal;color:#333;white-space:nowrap;transform-origin:0 0;transform:scaleX(1.0000);">36</div>
<div style="position:absolute;left:0px;top:612px;width:25px;height:1px;background:#c0c0c0;"></div>
<div style="position:absolute;left:5.79px;top:597.79px;font-size:12.06px;line-height:12.06px;font-weight:normal;font-style:normal;color:#333;white-space:nowrap;transform-origin:0 0;transform:scaleX(1.0000);">37</div>
<div style="position:absolute;left:0px;top:632px;width:25px;height:1px;background:#c0c0c0;"></div>
<div style="position:absolute;left:5.79px;top:617.79px;font-size:12.06px;line-height:12.06px;font-weight:normal;font-style:normal;color:#333;white-space:nowrap;transform-origin:0 0;transform:scaleX(1.0000);">38</div>
<div style="position:absolute;left:0px;top:652px;width:25px;height:1px;background:#c0c0c0;"></div>
<div style="position:absolute;left:5.79px;top:637.79px;font-size:12.06px;line-height:12.06px;font-weight:normal;font-style:normal;color:#333;white-space:nowrap;transform-origin:0 0;transform:scaleX(1.0000);">39</div>
<div style="position:absolute;left:0px;top:672px;width:25px;height:1px;background:#c0c0c0;"></div>
<div style="position:absolute;left:5.79px;top:657.79px;font-size:12.06px;line-height:12.06px;font-weight:normal;font-style:normal;color:#333;white-space:nowrap;transform-origin:0 0;transform:scaleX(1.0000);">40</div>
<div style="position:absolute;left:0px;top:678px;width:25px;height:1px;background:#c0c0c0;"></div>
<div style="position:absolute;left:26px;top:242px;width:1312px;height:1px;background:#d4d4d4;"></div>
<div style="position:absolute;left:26px;top:262px;width:1312px;height:1px;background:#d4d4d4;"></div>
<div style="position:absolute;left:26px;top:381px;width:1312px;height:1px;background:#d4d4d4;"></div>
<div style="position:absolute;left:26px;top:401px;width:1312px;height:1px;background:#d4d4d4;"></div>
<div style="position:absolute;left:26px;top:450px;width:1312px;height:1px;background:#d4d4d4;"></div>
<div style="position:absolute;left:26px;top:470px;width:1312px;height:1px;background:#d4d4d4;"></div>
<div style="position:absolute;left:26px;top:521px;width:1312px;height:1px;background:#d4d4d4;"></div>
<div style="position:absolute;left:26px;top:572px;width:1312px;height:1px;background:#d4d4d4;"></div>
<div style="position:absolute;left:26px;top:592px;width:1312px;height:1px;background:#d4d4d4;"></div>
<div style="position:absolute;left:26px;top:612px;width:1312px;height:1px;background:#d4d4d4;"></div>
<div style="position:absolute;left:26px;top:632px;width:1312px;height:1px;background:#d4d4d4;"></div>
<div style="position:absolute;left:26px;top:652px;width:1312px;height:1px;background:#d4d4d4;"></div>
<div style="position:absolute;left:26px;top:672px;width:1312px;height:1px;background:#d4d4d4;"></div>
<div style="position:absolute;left:162px;top:223px;width:1px;height:455px;background:#d4d4d4;"></div>
<div style="position:absolute;left:229px;top:223px;width:1px;height:455px;background:#d4d4d4;"></div>
<div style="position:absolute;left:298px;top:223px;width:1px;height:455px;background:#d4d4d4;"></div>
<div style="position:absolute;left:362px;top:223px;width:1px;height:455px;background:#d4d4d4;"></div>
<div style="position:absolute;left:444px;top:223px;width:1px;height:455px;background:#d4d4d4;"></div>
<div style="position:absolute;left:530px;top:223px;width:1px;height:455px;background:#d4d4d4;"></div>
<div style="position:absolute;left:609px;top:223px;width:1px;height:455px;background:#d4d4d4;"></div>
<div style="position:absolute;left:659px;top:223px;width:1px;height:455px;background:#d4d4d4;"></div>
<div style="position:absolute;left:706px;top:223px;width:1px;height:455px;background:#d4d4d4;"></div>
<div style="position:absolute;left:766px;top:223px;width:1px;height:455px;background:#d4d4d4;"></div>
<div style="position:absolute;left:817px;top:223px;width:1px;height:455px;background:#d4d4d4;"></div>
<div style="position:absolute;left:868px;top:223px;width:1px;height:455px;background:#d4d4d4;"></div>
<div style="position:absolute;left:924px;top:223px;width:1px;height:455px;background:#d4d4d4;"></div>
<div style="position:absolute;left:998px;top:223px;width:1px;height:455px;background:#d4d4d4;"></div>
<div style="position:absolute;left:1147px;top:223px;width:1px;height:455px;background:#d4d4d4;"></div>
<div style="position:absolute;left:1301px;top:223px;width:1px;height:455px;background:#d4d4d4;"></div>
<div style="position:absolute;left:26px;top:223px;width:418px;height:158px;background:#fff;"></div>
<div style="position:absolute;left:445px;top:223px;width:85px;height:158px;background:#fff;"></div>
<div style="position:absolute;left:531px;top:223px;width:78px;height:158px;background:#fff;"></div>
<div style="position:absolute;left:610px;top:223px;width:49px;height:158px;background:#fff;"></div>
<div style="position:absolute;left:660px;top:223px;width:46px;height:158px;background:#fff;"></div>
<div style="position:absolute;left:707px;top:223px;width:59px;height:158px;background:#fff;"></div>
<div style="position:absolute;left:767px;top:223px;width:50px;height:158px;background:#fff;"></div>
<div style="position:absolute;left:818px;top:223px;width:50px;height:158px;background:#fff;"></div>
<div style="position:absolute;left:925px;top:223px;width:73px;height:158px;background:#fff;"></div>
<div style="position:absolute;left:230px;top:382px;width:132px;height:19px;background:#fff;"></div>
<div style="position:absolute;left:26px;top:402px;width:136px;height:68px;background:#fff;"></div>
<div style="position:absolute;left:163px;top:402px;width:66px;height:68px;background:#fff;"></div>
<div style="position:absolute;left:230px;top:402px;width:68px;height:68px;background:#fff;"></div>
<div style="position:absolute;left:299px;top:402px;width:63px;height:68px;background:#fff;"></div>
<div style="position:absolute;left:445px;top:402px;width:85px;height:68px;background:#fff;"></div>
<div style="position:absolute;left:531px;top:402px;width:78px;height:68px;background:#fff;"></div>
<div style="position:absolute;left:925px;top:402px;width:73px;height:68px;background:#fff;"></div>
<div style="position:absolute;left:999px;top:402px;width:148px;height:68px;background:#fff;"></div>
<div style="position:absolute;left:1148px;top:402px;width:153px;height:68px;background:#fff;"></div>
<div style="position:absolute;left:610px;top:402px;width:156px;height:48px;background:#fff;"></div>
<div style="position:absolute;left:767px;top:402px;width:157px;height:48px;background:#fff;"></div>
<div style="position:absolute;left:444px;top:223px;width:1px;height:179px;background:#000;"></div>
<div style="position:absolute;left:530px;top:223px;width:1px;height:179px;background:#000;"></div>
<div style="position:absolute;left:609px;top:223px;width:1px;height:179px;background:#000;"></div>
<div style="position:absolute;left:659px;top:223px;width:1px;height:179px;background:#000;"></div>
<div style="position:absolute;left:706px;top:223px;width:1px;height:179px;background:#000;"></div>
<div style="position:absolute;left:766px;top:223px;width:1px;height:179px;background:#000;"></div>
<div style="position:absolute;left:817px;top:223px;width:1px;height:179px;background:#000;"></div>
<div style="position:absolute;left:868px;top:223px;width:1px;height:179px;background:#000;"></div>
<div style="position:absolute;left:924px;top:223px;width:1px;height:179px;background:#000;"></div>
<div style="position:absolute;left:998px;top:223px;width:1px;height:179px;background:#000;"></div>
<div style="position:absolute;left:868px;top:242px;width:57px;height:1px;background:#000;"></div>
<div style="position:absolute;left:868px;top:262px;width:57px;height:1px;background:#000;"></div>
<div style="position:absolute;left:444px;top:381px;width:555px;height:1px;background:#000;"></div>
<div style="position:absolute;left:162px;top:401px;width:1140px;height:1px;background:#000;"></div>
<div style="position:absolute;left:162px;top:401px;width:1px;height:70px;background:#000;"></div>
<div style="position:absolute;left:229px;top:401px;width:1px;height:70px;background:#000;"></div>
<div style="position:absolute;left:298px;top:401px;width:1px;height:70px;background:#000;"></div>
<div style="position:absolute;left:362px;top:401px;width:1px;height:70px;background:#000;"></div>
<div style="position:absolute;left:444px;top:401px;width:1px;height:70px;background:#000;"></div>
<div style="position:absolute;left:530px;top:401px;width:1px;height:70px;background:#000;"></div>
<div style="position:absolute;left:609px;top:401px;width:1px;height:70px;background:#000;"></div>
<div style="position:absolute;left:766px;top:401px;width:1px;height:70px;background:#000;"></div>
<div style="position:absolute;left:924px;top:401px;width:1px;height:70px;background:#000;"></div>
<div style="position:absolute;left:998px;top:401px;width:1px;height:70px;background:#000;"></div>
<div style="position:absolute;left:1147px;top:401px;width:1px;height:70px;background:#000;"></div>
<div style="position:absolute;left:1301px;top:401px;width:1px;height:70px;background:#000;"></div>
<div style="position:absolute;left:659px;top:450px;width:1px;height:21px;background:#000;"></div>
<div style="position:absolute;left:706px;top:450px;width:1px;height:21px;background:#000;"></div>
<div style="position:absolute;left:817px;top:450px;width:1px;height:21px;background:#000;"></div>
<div style="position:absolute;left:868px;top:450px;width:1px;height:21px;background:#000;"></div>
<div style="position:absolute;left:362px;top:450px;width:83px;height:1px;background:#000;"></div>
<div style="position:absolute;left:609px;top:450px;width:316px;height:1px;background:#000;"></div>
<div style="position:absolute;left:26px;top:470px;width:1312px;height:1px;background:#a6a6a6;"></div>
<div style="position:absolute;left:162px;top:471px;width:1px;height:207px;background:#000;"></div>
<div style="position:absolute;left:229px;top:471px;width:1px;height:207px;background:#000;"></div>
<div style="position:absolute;left:298px;top:471px;width:1px;height:207px;background:#000;"></div>
<div style="position:absolute;left:362px;top:471px;width:1px;height:207px;background:#000;"></div>
<div style="position:absolute;left:444px;top:471px;width:1px;height:207px;background:#000;"></div>
<div style="position:absolute;left:530px;top:471px;width:1px;height:207px;background:#000;"></div>
<div style="position:absolute;left:609px;top:471px;width:1px;height:207px;background:#000;"></div>
<div style="position:absolute;left:659px;top:471px;width:1px;height:207px;background:#000;"></div>
<div style="position:absolute;left:706px;top:471px;width:1px;height:207px;background:#000;"></div>
<div style="position:absolute;left:766px;top:471px;width:1px;height:207px;background:#000;"></div>
<div style="position:absolute;left:817px;top:471px;width:1px;height:207px;background:#000;"></div>
<div style="position:absolute;left:868px;top:471px;width:1px;height:207px;background:#000;"></div>
<div style="position:absolute;left:924px;top:471px;width:1px;height:207px;background:#000;"></div>
<div style="position:absolute;left:998px;top:471px;width:1px;height:207px;background:#000;"></div>
<div style="position:absolute;left:1147px;top:471px;width:1px;height:207px;background:#000;"></div>
<div style="position:absolute;left:1301px;top:471px;width:1px;height:207px;background:#000;"></div>
<div style="position:absolute;left:26px;top:521px;width:1276px;height:1px;background:#000;"></div>
<div style="position:absolute;left:26px;top:572px;width:1276px;height:1px;background:#000;"></div>
<div style="position:absolute;left:26px;top:592px;width:1276px;height:1px;background:#000;"></div>
<div style="position:absolute;left:26px;top:612px;width:1276px;height:1px;background:#000;"></div>
<div style="position:absolute;left:26px;top:632px;width:1276px;height:1px;background:#000;"></div>
<div style="position:absolute;left:26px;top:652px;width:1276px;height:1px;background:#000;"></div>
<div style="position:absolute;left:26px;top:672px;width:1276px;height:1px;background:#000;"></div>
<svg style="left:26px;top:227px" width="8" height="146" viewBox="0 0 8 146"><rect x="0" y="0" width="8" height="146" fill="#03892f"/><path d="M0 88h7.5L0 101.5z" fill="#fff"/><path d="M8 90v26L0 130.5V104z" fill="#9fc11b"/></svg>
<div style="position:absolute;left:25px;top:380px;width:139px;height:2px;background:#217346;"></div>
<div style="position:absolute;left:25px;top:401px;width:139px;height:2px;background:#217346;"></div>
<div style="position:absolute;left:162px;top:380px;width:2px;height:23px;background:#217346;"></div>
<div style="position:absolute;left:25px;top:380px;width:2px;height:23px;background:#217346;"></div>
<div style="position:absolute;left:158px;top:397px;width:8px;height:8px;background:#fff;"></div>
<div style="position:absolute;left:160px;top:399px;width:5px;height:5px;background:#217346;"></div>
<div style="position:absolute;left:165px;top:401px;width:10px;height:1px;background:#000;"></div>
<div style="position:absolute;left:162px;top:404px;width:1px;height:8px;background:#000;"></div>
<div style="position:absolute;left:61.00px;top:287.16px;font-size:12.21px;line-height:12.21px;font-weight:bold;font-style:normal;color:#000;white-space:nowrap;transform-origin:0 0;transform:scaleX(1.0087);-webkit-text-stroke:0.12px #000;">REGISTRO DE FACTURAS DE COMPRA Y RETENCIONES A</div>
<div style="position:absolute;left:125.00px;top:304.16px;font-size:12.21px;line-height:12.21px;font-weight:bold;font-style:normal;color:#000;white-space:nowrap;transform-origin:0 0;transform:scaleX(0.9944);-webkit-text-stroke:0.12px #000;">PROVEEDORES DE NOVIEMBRE 2022</div>
<div style="position:absolute;left:466.15px;top:287.32px;font-size:10.61px;line-height:10.61px;font-weight:bold;font-style:normal;color:#000;white-space:nowrap;transform-origin:0 0;transform:scaleX(1.0200);-webkit-text-stroke:0.12px #000;">Botellas</div>
<div style="position:absolute;left:454.72px;top:304.22px;font-size:10.61px;line-height:10.61px;font-weight:bold;font-style:normal;color:#000;white-space:nowrap;transform-origin:0 0;transform:scaleX(1.0200);-webkit-text-stroke:0.12px #000;">plásticas 1%</div>
<div style="position:absolute;left:538.24px;top:236.42px;font-size:10.61px;line-height:10.61px;font-weight:bold;font-style:normal;color:#000;white-space:nowrap;transform-origin:0 0;transform:scaleX(1.0500);-webkit-text-stroke:0.12px #000;">Actividades</div>
<div style="position:absolute;left:563.00px;top:253.35px;font-size:10.61px;line-height:10.61px;font-weight:bold;font-style:normal;color:#000;white-space:nowrap;transform-origin:0 0;transform:scaleX(1.0500);-webkit-text-stroke:0.12px #000;">de</div>
<div style="position:absolute;left:534.52px;top:270.28px;font-size:10.61px;line-height:10.61px;font-weight:bold;font-style:normal;color:#000;white-space:nowrap;transform-origin:0 0;transform:scaleX(1.0500);-webkit-text-stroke:0.12px #000;">construcción</div>
<div style="position:absolute;left:549.35px;top:287.21px;font-size:10.61px;line-height:10.61px;font-weight:bold;font-style:normal;color:#000;white-space:nowrap;transform-origin:0 0;transform:scaleX(1.0500);-webkit-text-stroke:0.12px #000;">de obra</div>
<div style="position:absolute;left:545.03px;top:304.14px;font-size:10.61px;line-height:10.61px;font-weight:bold;font-style:normal;color:#000;white-space:nowrap;transform-origin:0 0;transform:scaleX(1.0500);-webkit-text-stroke:0.12px #000;">materias,</div>
<div style="position:absolute;left:543.50px;top:321.07px;font-size:10.61px;line-height:10.61px;font-weight:bold;font-style:normal;color:#000;white-space:nowrap;transform-origin:0 0;transform:scaleX(1.0500);-webkit-text-stroke:0.12px #000;">inmueble,</div>
<div style="position:absolute;left:535.14px;top:338.00px;font-size:10.61px;line-height:10.61px;font-weight:bold;font-style:normal;color:#000;white-space:nowrap;transform-origin:0 0;transform:scaleX(1.0500);-webkit-text-stroke:0.12px #000;">urbanización</div>
<div style="position:absolute;left:553.71px;top:354.93px;font-size:10.61px;line-height:10.61px;font-weight:bold;font-style:normal;color:#000;white-space:nowrap;transform-origin:0 0;transform:scaleX(1.0500);-webkit-text-stroke:0.12px #000;">1,75%</div>
<div style="position:absolute;left:612.67px;top:270.32px;font-size:10.61px;line-height:10.61px;font-weight:bold;font-style:normal;color:#000;white-space:nowrap;transform-origin:0 0;transform:scaleX(1.0800);-webkit-text-stroke:0.12px #000;">Cuando</div>
<div style="position:absolute;left:615.54px;top:287.25px;font-size:10.61px;line-height:10.61px;font-weight:bold;font-style:normal;color:#000;white-space:nowrap;transform-origin:0 0;transform:scaleX(1.0800);-webkit-text-stroke:0.12px #000;">no hay</div>
<div style="position:absolute;left:611.71px;top:304.18px;font-size:10.61px;line-height:10.61px;font-weight:bold;font-style:normal;color:#000;white-space:nowrap;transform-origin:0 0;transform:scaleX(1.0800);-webkit-text-stroke:0.12px #000;">retenció</div>
<div style="position:absolute;left:630.50px;top:321.11px;font-size:10.61px;line-height:10.61px;font-weight:bold;font-style:normal;color:#000;white-space:nowrap;transform-origin:0 0;transform:scaleX(1.0800);-webkit-text-stroke:0.12px #000;">n</div>
<div style="position:absolute;left:664.31px;top:253.22px;font-size:10.61px;line-height:10.61px;font-weight:bold;font-style:normal;color:#000;white-space:nowrap;transform-origin:0 0;transform:scaleX(0.9700);-webkit-text-stroke:0.12px #000;">100 % y</div>
<div style="position:absolute;left:672.62px;top:270.15px;font-size:10.61px;line-height:10.61px;font-weight:bold;font-style:normal;color:#000;white-space:nowrap;transform-origin:0 0;transform:scaleX(0.9700);-webkit-text-stroke:0.12px #000;">1%.-</div>
<div style="position:absolute;left:664.61px;top:287.08px;font-size:10.61px;line-height:10.61px;font-weight:bold;font-style:normal;color:#000;white-space:nowrap;transform-origin:0 0;transform:scaleX(0.9700);-webkit-text-stroke:0.12px #000;">Regime</div>
<div style="position:absolute;left:680.06px;top:304.01px;font-size:10.61px;line-height:10.61px;font-weight:bold;font-style:normal;color:#000;white-space:nowrap;transform-origin:0 0;transform:scaleX(0.9700);-webkit-text-stroke:0.12px #000;">n</div>
<div style="position:absolute;left:666.32px;top:320.94px;font-size:10.61px;line-height:10.61px;font-weight:bold;font-style:normal;color:#000;white-space:nowrap;transform-origin:0 0;transform:scaleX(0.9700);-webkit-text-stroke:0.12px #000;">microe</div>
<div style="position:absolute;left:664.85px;top:337.87px;font-size:10.61px;line-height:10.61px;font-weight:bold;font-style:normal;color:#000;white-space:nowrap;transform-origin:0 0;transform:scaleX(0.9700);-webkit-text-stroke:0.12px #000;">mpresa</div>
<div style="position:absolute;left:711.85px;top:264.59px;font-size:10.17px;line-height:10.17px;font-weight:bold;font-style:normal;color:#000;white-space:nowrap;transform-origin:0 0;transform:scaleX(0.9400);-webkit-text-stroke:0.12px #000;">Productos</div>
<div style="position:absolute;left:713.17px;top:280.69px;font-size:10.17px;line-height:10.17px;font-weight:bold;font-style:normal;color:#000;white-space:nowrap;transform-origin:0 0;transform:scaleX(0.9400);-webkit-text-stroke:0.12px #000;">agricoilas</div>
<div style="position:absolute;left:732.58px;top:296.79px;font-size:10.17px;line-height:10.17px;font-weight:bold;font-style:normal;color:#000;white-space:nowrap;transform-origin:0 0;transform:scaleX(0.9400);-webkit-text-stroke:0.12px #000;">o</div>
<div style="position:absolute;left:712.64px;top:312.89px;font-size:10.17px;line-height:10.17px;font-weight:bold;font-style:normal;color:#000;white-space:nowrap;transform-origin:0 0;transform:scaleX(0.9400);-webkit-text-stroke:0.12px #000;">Pecuarios</div>
<div style="position:absolute;left:728.59px;top:328.99px;font-size:10.17px;line-height:10.17px;font-weight:bold;font-style:normal;color:#000;white-space:nowrap;transform-origin:0 0;transform:scaleX(0.9400);-webkit-text-stroke:0.12px #000;">1%</div>
<div style="position:absolute;left:769.63px;top:253.42px;font-size:10.61px;line-height:10.61px;font-weight:bold;font-style:normal;color:#000;white-space:nowrap;transform-origin:0 0;transform:scaleX(1.0300);-webkit-text-stroke:0.12px #000;">Transfer</div>
<div style="position:absolute;left:777.20px;top:270.47px;font-size:10.61px;line-height:10.61px;font-weight:bold;font-style:normal;color:#000;white-space:nowrap;transform-origin:0 0;transform:scaleX(1.0300);-webkit-text-stroke:0.12px #000;">encia</div>
<div style="position:absolute;left:784.82px;top:287.52px;font-size:10.61px;line-height:10.61px;font-weight:bold;font-style:normal;color:#000;white-space:nowrap;transform-origin:0 0;transform:scaleX(1.0300);-webkit-text-stroke:0.12px #000;">de</div>
<div style="position:absolute;left:773.89px;top:304.57px;font-size:10.61px;line-height:10.61px;font-weight:bold;font-style:normal;color:#000;white-space:nowrap;transform-origin:0 0;transform:scaleX(1.0300);-webkit-text-stroke:0.12px #000;">bienes</div>
<div style="position:absolute;left:769.03px;top:321.62px;font-size:10.61px;line-height:10.61px;font-weight:bold;font-style:normal;color:#000;white-space:nowrap;transform-origin:0 0;transform:scaleX(1.0300);-webkit-text-stroke:0.12px #000;">muebles</div>
<div style="position:absolute;left:775.71px;top:338.67px;font-size:10.61px;line-height:10.61px;font-weight:bold;font-style:normal;color:#000;white-space:nowrap;transform-origin:0 0;transform:scaleX(1.0300);-webkit-text-stroke:0.12px #000;">1,75%</div>
<div style="position:absolute;left:820.14px;top:270.82px;font-size:10.61px;line-height:10.61px;font-weight:bold;font-style:normal;color:#000;white-space:nowrap;transform-origin:0 0;transform:scaleX(1.0900);-webkit-text-stroke:0.12px #000;">para las</div>
<div style="position:absolute;left:819.51px;top:287.72px;font-size:10.61px;line-height:10.61px;font-weight:bold;font-style:normal;color:#000;white-space:nowrap;transform-origin:0 0;transform:scaleX(1.0900);-webkit-text-stroke:0.12px #000;">retencio</div>
<div style="position:absolute;left:822.08px;top:304.62px;font-size:10.61px;line-height:10.61px;font-weight:bold;font-style:normal;color:#000;white-space:nowrap;transform-origin:0 0;transform:scaleX(1.0900);-webkit-text-stroke:0.12px #000;">nes del</div>
<div style="position:absolute;left:825.61px;top:321.52px;font-size:10.61px;line-height:10.61px;font-weight:bold;font-style:normal;color:#000;white-space:nowrap;transform-origin:0 0;transform:scaleX(1.0900);-webkit-text-stroke:0.12px #000;">2,75%</div>
<div style="position:absolute;left:937.98px;top:270.82px;font-size:10.61px;line-height:10.61px;font-weight:bold;font-style:normal;color:#000;white-space:nowrap;transform-origin:0 0;transform:scaleX(1.0500);-webkit-text-stroke:0.12px #000;">Regimen</div>
<div style="position:absolute;left:929.93px;top:287.72px;font-size:10.61px;line-height:10.61px;font-weight:bold;font-style:normal;color:#000;white-space:nowrap;transform-origin:0 0;transform:scaleX(1.0500);-webkit-text-stroke:0.12px #000;">Microempre</div>
<div style="position:absolute;left:929.29px;top:304.62px;font-size:10.61px;line-height:10.61px;font-weight:bold;font-style:normal;color:#000;white-space:nowrap;transform-origin:0 0;transform:scaleX(1.0500);-webkit-text-stroke:0.12px #000;">sarial: 100%</div>
<div style="position:absolute;left:939.51px;top:321.52px;font-size:10.61px;line-height:10.61px;font-weight:bold;font-style:normal;color:#000;white-space:nowrap;transform-origin:0 0;transform:scaleX(1.0500);-webkit-text-stroke:0.12px #000;">y 1,75 %</div>
<div style="position:absolute;left:264.40px;top:385.19px;font-size:12.06px;line-height:12.06px;font-weight:bold;font-style:normal;color:#000;white-space:nowrap;transform-origin:0 0;transform:scaleX(1.0074);-webkit-text-stroke:0.12px #000;">TOTAL 332</div>
<div style="position:absolute;left:389.00px;top:385.19px;font-size:12.06px;line-height:12.06px;font-weight:bold;font-style:normal;color:#000;white-space:nowrap;transform-origin:0 0;transform:scaleX(1.0317);-webkit-text-stroke:0.12px #000;">29507.46</div>
<div style="position:absolute;left:471.60px;top:385.60px;font-size:11.34px;line-height:11.34px;font-weight:bold;font-style:normal;color:#000;white-space:nowrap;transform-origin:0 0;transform:scaleX(1.1293);-webkit-text-stroke:0.12px #000;">343C</div>
<div style="position:absolute;left:555.50px;top:385.60px;font-size:11.34px;line-height:11.34px;font-weight:bold;font-style:normal;color:#000;white-space:nowrap;transform-origin:0 0;transform:scaleX(1.0592);-webkit-text-stroke:0.12px #000;">343B</div>
<div style="position:absolute;left:623.80px;top:385.60px;font-size:11.34px;line-height:11.34px;font-weight:bold;font-style:normal;color:#000;white-space:nowrap;transform-origin:0 0;transform:scaleX(1.0738);-webkit-text-stroke:0.12px #000;">332</div>
<div style="position:absolute;left:672.90px;top:385.60px;font-size:11.34px;line-height:11.34px;font-weight:bold;font-style:normal;color:#000;white-space:nowrap;transform-origin:0 0;transform:scaleX(1.0791);-webkit-text-stroke:0.12px #000;">343</div>
<div style="position:absolute;left:720.80px;top:385.60px;font-size:11.34px;line-height:11.34px;font-weight:bold;font-style:normal;color:#000;white-space:nowrap;transform-origin:0 0;transform:scaleX(1.1515);-webkit-text-stroke:0.12px #000;">312A</div>
<div style="position:absolute;left:828.70px;top:385.60px;font-size:11.34px;line-height:11.34px;font-weight:bold;font-style:normal;color:#000;white-space:nowrap;transform-origin:0 0;transform:scaleX(1.0941);-webkit-text-stroke:0.12px #000;">3440</div>
<div style="position:absolute;left:950.50px;top:385.60px;font-size:11.34px;line-height:11.34px;font-weight:bold;font-style:normal;color:#000;white-space:nowrap;transform-origin:0 0;transform:scaleX(1.0156);-webkit-text-stroke:0.12px #000;">351</div>
<div style="position:absolute;left:781.50px;top:386.20px;font-size:11.34px;line-height:11.34px;font-weight:normal;font-style:normal;color:#000;white-space:nowrap;transform-origin:0 0;transform:scaleX(1.1055);-webkit-text-stroke:0.15px #000;">312</div>
<div style="position:absolute;left:59.40px;top:430.35px;font-size:11.05px;line-height:11.05px;font-weight:bold;font-style:normal;color:#000;white-space:nowrap;transform-origin:0 0;transform:scaleX(0.9619);-webkit-text-stroke:0.12px #000;">PROVEEDOR</div>
<div style="position:absolute;left:168.75px;top:430.25px;font-size:11.05px;line-height:11.05px;font-weight:bold;font-style:normal;color:#000;white-space:nowrap;transform-origin:0 0;transform:scaleX(0.8556);-webkit-text-stroke:0.12px #000;">BASE</div>
<div style="position:absolute;left:200.70px;top:430.25px;font-size:11.05px;line-height:11.05px;font-weight:bold;font-style:normal;color:#000;white-space:nowrap;transform-origin:0 0;transform:scaleX(1.0009);-webkit-text-stroke:0.12px #000;">12</div>
<div style="position:absolute;left:240.80px;top:430.25px;font-size:11.05px;line-height:11.05px;font-weight:bold;font-style:normal;color:#000;white-space:nowrap;transform-origin:0 0;transform:scaleX(0.8539);-webkit-text-stroke:0.12px #000;">BASE</div>
<div style="position:absolute;left:272.70px;top:430.25px;font-size:11.05px;line-height:11.05px;font-weight:bold;font-style:normal;color:#000;white-space:nowrap;transform-origin:0 0;transform:scaleX(1.0838);-webkit-text-stroke:0.12px #000;">0%</div>
<div style="position:absolute;left:320.60px;top:430.15px;font-size:11.05px;line-height:11.05px;font-weight:bold;font-style:normal;color:#000;white-space:nowrap;transform-origin:0 0;transform:scaleX(1.0857);-webkit-text-stroke:0.12px #000;">IVA</div>
<div style="position:absolute;left:371.80px;top:420.15px;font-size:11.05px;line-height:11.05px;font-weight:bold;font-style:normal;color:#000;white-space:nowrap;transform-origin:0 0;transform:scaleX(1.0000);-webkit-text-stroke:0.12px #000;">SUBTO-TAL</div>
<div style="position:absolute;left:394.00px;top:455.15px;font-size:11.05px;line-height:11.05px;font-weight:normal;font-style:normal;color:#000;white-space:nowrap;transform-origin:0 0;transform:scaleX(1.0858);-webkit-text-stroke:0.15px #000;">332</div>
<div style="position:absolute;left:469.90px;top:430.15px;font-size:11.05px;line-height:11.05px;font-weight:bold;font-style:normal;color:#000;white-space:nowrap;transform-origin:0 0;transform:scaleX(1.0031);-webkit-text-stroke:0.12px #000;">TOTAL</div>
<div style="position:absolute;left:563.40px;top:421.65px;font-size:11.05px;line-height:11.05px;font-weight:bold;font-style:normal;color:#000;white-space:nowrap;transform-origin:0 0;transform:scaleX(1.0968);-webkit-text-stroke:0.12px #000;">N°</div>
<div style="position:absolute;left:537.50px;top:437.95px;font-size:11.05px;line-height:11.05px;font-weight:bold;font-style:normal;color:#000;white-space:nowrap;transform-origin:0 0;transform:scaleX(1.0374);-webkit-text-stroke:0.12px #000;">RETENCION</div>
<div style="position:absolute;left:643.70px;top:419.75px;font-size:11.05px;line-height:11.05px;font-weight:bold;font-style:normal;color:#000;white-space:nowrap;transform-origin:0 0;transform:scaleX(1.0394);-webkit-text-stroke:0.12px #000;">RETENCION IVA</div>
<div style="position:absolute;left:635.00px;top:455.25px;font-size:11.05px;line-height:11.05px;font-weight:bold;font-style:normal;color:#000;white-space:nowrap;transform-origin:0 0;transform:scaleX(0.9855);-webkit-text-stroke:0.12px #000;">30%</div>
<div style="position:absolute;left:682.00px;top:455.25px;font-size:11.05px;line-height:11.05px;font-weight:bold;font-style:normal;color:#000;white-space:nowrap;transform-origin:0 0;transform:scaleX(0.9765);-webkit-text-stroke:0.12px #000;">70%</div>
<div style="position:absolute;left:734.70px;top:455.25px;font-size:11.05px;line-height:11.05px;font-weight:bold;font-style:normal;color:#000;white-space:nowrap;transform-origin:0 0;transform:scaleX(1.0371);-webkit-text-stroke:0.12px #000;">100%</div>
<div style="position:absolute;left:776.50px;top:419.75px;font-size:11.05px;line-height:11.05px;font-weight:bold;font-style:normal;color:#000;white-space:nowrap;transform-origin:0 0;transform:scaleX(1.0325);-webkit-text-stroke:0.12px #000;">RETENCIÓN A LA RENTA</div>
<div style="position:absolute;left:791.60px;top:455.25px;font-size:11.05px;line-height:11.05px;font-weight:bold;font-style:normal;color:#000;white-space:nowrap;transform-origin:0 0;transform:scaleX(0.9531);-webkit-text-stroke:0.12px #000;">COD</div>
<div style="position:absolute;left:837.60px;top:455.25px;font-size:11.05px;line-height:11.05px;font-weight:bold;font-style:normal;color:#000;white-space:nowrap;transform-origin:0 0;transform:scaleX(0.9256);-webkit-text-stroke:0.12px #000;">%</div>
<div style="position:absolute;left:901.30px;top:455.25px;font-size:11.05px;line-height:11.05px;font-weight:bold;font-style:normal;color:#000;white-space:nowrap;transform-origin:0 0;transform:scaleX(0.9499);-webkit-text-stroke:0.12px #000;">VAL</div>
<div style="position:absolute;left:942.60px;top:422.15px;font-size:11.05px;line-height:11.05px;font-weight:bold;font-style:normal;color:#000;white-space:nowrap;transform-origin:0 0;transform:scaleX(0.9806);-webkit-text-stroke:0.12px #000;">VALOR</div>
<div style="position:absolute;left:945.70px;top:437.95px;font-size:11.05px;line-height:11.05px;font-weight:bold;font-style:normal;color:#000;white-space:nowrap;transform-origin:0 0;transform:scaleX(1.0188);-webkit-text-stroke:0.12px #000;">PAGO</div>
<div style="position:absolute;left:1040.90px;top:413.75px;font-size:11.05px;line-height:11.05px;font-weight:bold;font-style:normal;color:#000;white-space:nowrap;transform-origin:0 0;transform:scaleX(0.9729);-webkit-text-stroke:0.12px #000;">RETENCION</div>
<div style="position:absolute;left:1029.40px;top:429.85px;font-size:11.05px;line-height:11.05px;font-weight:bold;font-style:normal;color:#000;white-space:nowrap;transform-origin:0 0;transform:scaleX(1.0192);-webkit-text-stroke:0.12px #000;">AUTORIZACION</div>
<div style="position:absolute;left:1030.10px;top:445.85px;font-size:11.05px;line-height:11.05px;font-weight:bold;font-style:normal;color:#000;white-space:nowrap;transform-origin:0 0;transform:scaleX(0.9799);-webkit-text-stroke:0.12px #000;">COMPROBANTE</div>
<div style="position:absolute;left:1188.00px;top:429.85px;font-size:11.05px;line-height:11.05px;font-weight:bold;font-style:normal;color:#000;white-space:nowrap;transform-origin:0 0;transform:scaleX(0.9411);-webkit-text-stroke:0.12px #000;">DESCRIPCION</div>
<div style="position:absolute;left:145px;top:432px;width:17px;height:17px;background:linear-gradient(#fbfcfd,#e9ecf1);border:1px solid #b4bac4;"></div>
<svg style="left:150px;top:439px" width="8" height="4" viewBox="0 0 8 4"><path d="M0 0h8L4 4z" fill="#6b6b6b"/></svg>
<div style="position:absolute;left:212px;top:432px;width:17px;height:17px;background:linear-gradient(#fbfcfd,#e9ecf1);border:1px solid #b4bac4;"></div>
<svg style="left:217px;top:439px" width="8" height="4" viewBox="0 0 8 4"><path d="M0 0h8L4 4z" fill="#6b6b6b"/></svg>
<div style="position:absolute;left:281px;top:432px;width:17px;height:17px;background:linear-gradient(#fbfcfd,#e9ecf1);border:1px solid #b4bac4;"></div>
<svg style="left:286px;top:439px" width="8" height="4" viewBox="0 0 8 4"><path d="M0 0h8L4 4z" fill="#6b6b6b"/></svg>
<div style="position:absolute;left:345px;top:432px;width:17px;height:17px;background:linear-gradient(#fbfcfd,#e9ecf1);border:1px solid #b4bac4;"></div>
<svg style="left:350px;top:439px" width="8" height="4" viewBox="0 0 8 4"><path d="M0 0h8L4 4z" fill="#6b6b6b"/></svg>
<div style="position:absolute;left:428px;top:432px;width:17px;height:17px;background:linear-gradient(#fbfcfd,#e9ecf1);border:1px solid #b4bac4;"></div>
<svg style="left:433px;top:439px" width="8" height="4" viewBox="0 0 8 4"><path d="M0 0h8L4 4z" fill="#6b6b6b"/></svg>
<div style="position:absolute;left:513px;top:432px;width:17px;height:17px;background:linear-gradient(#fbfcfd,#e9ecf1);border:1px solid #b4bac4;"></div>
<svg style="left:518px;top:439px" width="8" height="4" viewBox="0 0 8 4"><path d="M0 0h8L4 4z" fill="#6b6b6b"/></svg>
<div style="position:absolute;left:592px;top:432px;width:17px;height:17px;background:linear-gradient(#fbfcfd,#e9ecf1);border:1px solid #b4bac4;"></div>
<svg style="left:597px;top:439px" width="8" height="4" viewBox="0 0 8 4"><path d="M0 0h8L4 4z" fill="#6b6b6b"/></svg>
<div style="position:absolute;left:749px;top:432px;width:17px;height:17px;background:linear-gradient(#fbfcfd,#e9ecf1);border:1px solid #b4bac4;"></div>
<svg style="left:754px;top:439px" width="8" height="4" viewBox="0 0 8 4"><path d="M0 0h8L4 4z" fill="#6b6b6b"/></svg>
<div style="position:absolute;left:907px;top:432px;width:17px;height:17px;background:linear-gradient(#fbfcfd,#e9ecf1);border:1px solid #b4bac4;"></div>
<svg style="left:912px;top:439px" width="8" height="4" viewBox="0 0 8 4"><path d="M0 0h8L4 4z" fill="#6b6b6b"/></svg>
<div style="position:absolute;left:981px;top:432px;width:17px;height:17px;background:linear-gradient(#fbfcfd,#e9ecf1);border:1px solid #b4bac4;"></div>
<svg style="left:986px;top:439px" width="8" height="4" viewBox="0 0 8 4"><path d="M0 0h8L4 4z" fill="#6b6b6b"/></svg>
<div style="position:absolute;left:1130px;top:432px;width:17px;height:17px;background:linear-gradient(#fbfcfd,#e9ecf1);border:1px solid #b4bac4;"></div>
<svg style="left:1135px;top:439px" width="8" height="4" viewBox="0 0 8 4"><path d="M0 0h8L4 4z" fill="#6b6b6b"/></svg>
<div style="position:absolute;left:1284px;top:432px;width:17px;height:17px;background:linear-gradient(#fbfcfd,#e9ecf1);border:1px solid #b4bac4;"></div>
<svg style="left:1289px;top:439px" width="8" height="4" viewBox="0 0 8 4"><path d="M0 0h8L4 4z" fill="#6b6b6b"/></svg>
<div style="position:absolute;left:28.50px;top:483.02px;font-size:10.61px;line-height:10.61px;font-weight:normal;font-style:normal;color:#000;white-space:nowrap;transform-origin:0 0;transform:scaleX(0.9827);-webkit-text-stroke:0.15px #000;">LOMBEIDA GONZALEZ</div>
<div style="position:absolute;left:28.50px;top:499.72px;font-size:10.61px;line-height:10.61px;font-weight:normal;font-style:normal;color:#000;white-space:nowrap;transform-origin:0 0;transform:scaleX(0.9517);-webkit-text-stroke:0.15px #000;">JENNY SILVANA</div>
<div style="position:absolute;left:181.00px;top:492.02px;font-size:10.61px;line-height:10.61px;font-weight:normal;font-style:normal;color:#000;white-space:nowrap;transform-origin:0 0;transform:scaleX(1.1411);-webkit-text-stroke:0.15px #000;">29.93</div>
<div style="position:absolute;left:249.00px;top:492.02px;font-size:10.61px;line-height:10.61px;font-weight:normal;font-style:normal;color:#000;white-space:nowrap;transform-origin:0 0;transform:scaleX(1.1637);-webkit-text-stroke:0.15px #000;">55.64</div>
<div style="position:absolute;left:319.40px;top:492.02px;font-size:10.61px;line-height:10.61px;font-weight:normal;font-style:normal;color:#000;white-space:nowrap;transform-origin:0 0;transform:scaleX(1.1227);-webkit-text-stroke:0.15px #000;">3.59</div>
<div style="position:absolute;left:388.00px;top:492.02px;font-size:10.61px;line-height:10.61px;font-weight:normal;font-style:normal;color:#000;white-space:nowrap;transform-origin:0 0;transform:scaleX(1.1374);-webkit-text-stroke:0.15px #000;">85.57</div>
<div style="position:absolute;left:472.60px;top:492.02px;font-size:10.61px;line-height:10.61px;font-weight:normal;font-style:normal;color:#000;white-space:nowrap;transform-origin:0 0;transform:scaleX(1.1261);-webkit-text-stroke:0.15px #000;">89.16</div>
<div style="position:absolute;left:538.80px;top:492.02px;font-size:10.61px;line-height:10.61px;font-weight:normal;font-style:normal;color:#000;white-space:nowrap;transform-origin:0 0;transform:scaleX(1.1808);-webkit-text-stroke:0.15px #000;">000001163</div>
<div style="position:absolute;left:726.00px;top:492.02px;font-size:10.61px;line-height:10.61px;font-weight:normal;font-style:normal;color:#000;white-space:nowrap;transform-origin:0 0;transform:scaleX(1.0937);-webkit-text-stroke:0.15px #000;">3.59</div>
<div style="position:absolute;left:782.50px;top:492.02px;font-size:10.61px;line-height:10.61px;font-weight:normal;font-style:normal;color:#000;white-space:nowrap;transform-origin:0 0;transform:scaleX(1.1304);-webkit-text-stroke:0.15px #000;">312</div>
<div style="position:absolute;left:827.50px;top:492.02px;font-size:10.61px;line-height:10.61px;font-weight:normal;font-style:normal;color:#000;white-space:nowrap;transform-origin:0 0;transform:scaleX(1.0738);-webkit-text-stroke:0.15px #000;">1.75%</div>
<div style="position:absolute;left:885.50px;top:492.02px;font-size:10.61px;line-height:10.61px;font-weight:normal;font-style:normal;color:#000;white-space:nowrap;transform-origin:0 0;transform:scaleX(1.1276);-webkit-text-stroke:0.15px #000;">1.50</div>
<div style="position:absolute;left:946.00px;top:492.02px;font-size:10.61px;line-height:10.61px;font-weight:normal;font-style:normal;color:#000;white-space:nowrap;transform-origin:0 0;transform:scaleX(1.1411);-webkit-text-stroke:0.15px #000;">84.07</div>
<div style="position:absolute;left:28.50px;top:533.12px;font-size:10.61px;line-height:10.61px;font-weight:normal;font-style:normal;color:#000;white-space:nowrap;transform-origin:0 0;transform:scaleX(0.9743);-webkit-text-stroke:0.15px #000;">CEDEÑO ORDOÑEZ</div>
<div style="position:absolute;left:28.50px;top:550.12px;font-size:10.61px;line-height:10.61px;font-weight:normal;font-style:normal;color:#000;white-space:nowrap;transform-origin:0 0;transform:scaleX(0.9522);-webkit-text-stroke:0.15px #000;">ISRAEL DAVID</div>
<div style="position:absolute;left:245.90px;top:542.32px;font-size:10.61px;line-height:10.61px;font-weight:normal;font-style:normal;color:#000;white-space:nowrap;transform-origin:0 0;transform:scaleX(1.1220);-webkit-text-stroke:0.15px #000;">318.00</div>
<div style="position:absolute;left:319.40px;top:542.32px;font-size:10.61px;line-height:10.61px;font-weight:normal;font-style:normal;color:#000;white-space:nowrap;transform-origin:0 0;transform:scaleX(1.1227);-webkit-text-stroke:0.15px #000;">0.00</div>
<div style="position:absolute;left:385.80px;top:542.32px;font-size:10.61px;line-height:10.61px;font-weight:normal;font-style:normal;color:#000;white-space:nowrap;transform-origin:0 0;transform:scaleX(1.1220);-webkit-text-stroke:0.15px #000;">318.00</div>
<div style="position:absolute;left:469.30px;top:542.32px;font-size:10.61px;line-height:10.61px;font-weight:normal;font-style:normal;color:#000;white-space:nowrap;transform-origin:0 0;transform:scaleX(1.1498);-webkit-text-stroke:0.15px #000;">318.00</div>
<div style="position:absolute;left:538.80px;top:542.32px;font-size:10.61px;line-height:10.61px;font-weight:normal;font-style:normal;color:#000;white-space:nowrap;transform-origin:0 0;transform:scaleX(1.1808);-webkit-text-stroke:0.15px #000;">000001164</div>
<div style="position:absolute;left:726.00px;top:542.32px;font-size:10.61px;line-height:10.61px;font-weight:normal;font-style:normal;color:#000;white-space:nowrap;transform-origin:0 0;transform:scaleX(1.0937);-webkit-text-stroke:0.15px #000;">0.00</div>
<div style="position:absolute;left:778.40px;top:542.32px;font-size:10.61px;line-height:10.61px;font-weight:normal;font-style:normal;color:#000;white-space:nowrap;transform-origin:0 0;transform:scaleX(1.1437);-webkit-text-stroke:0.15px #000;">3440</div>
<div style="position:absolute;left:827.50px;top:542.32px;font-size:10.61px;line-height:10.61px;font-weight:normal;font-style:normal;color:#000;white-space:nowrap;transform-origin:0 0;transform:scaleX(1.0738);-webkit-text-stroke:0.15px #000;">2.75%</div>
<div style="position:absolute;left:885.50px;top:542.32px;font-size:10.61px;line-height:10.61px;font-weight:normal;font-style:normal;color:#000;white-space:nowrap;transform-origin:0 0;transform:scaleX(1.1276);-webkit-text-stroke:0.15px #000;">8.75</div>
<div style="position:absolute;left:943.60px;top:542.32px;font-size:10.61px;line-height:10.61px;font-weight:normal;font-style:normal;color:#000;white-space:nowrap;transform-origin:0 0;transform:scaleX(1.1343);-webkit-text-stroke:0.15px #000;">309.26</div>
<div style="position:absolute;left:1001.80px;top:474.42px;font-size:10.61px;line-height:10.61px;font-weight:normal;font-style:normal;color:#000;white-space:nowrap;transform-origin:0 0;transform:scaleX(1.1813);-webkit-text-stroke:0.15px #000;">30112022071768120600</div>
<div style="position:absolute;left:1001.80px;top:491.22px;font-size:10.61px;line-height:10.61px;font-weight:normal;font-style:normal;color:#000;white-space:nowrap;transform-origin:0 0;transform:scaleX(1.1813);-webkit-text-stroke:0.15px #000;">00120010010000011631</div>
<div style="position:absolute;left:1001.80px;top:507.82px;font-size:10.61px;line-height:10.61px;font-weight:normal;font-style:normal;color:#000;white-space:nowrap;transform-origin:0 0;transform:scaleX(1.1600);-webkit-text-stroke:0.15px #000;">234567818</div>
<div style="position:absolute;left:1001.80px;top:525.62px;font-size:10.61px;line-height:10.61px;font-weight:normal;font-style:normal;color:#000;white-space:nowrap;transform-origin:0 0;transform:scaleX(1.1813);-webkit-text-stroke:0.15px #000;">30112022071768120600</div>
<div style="position:absolute;left:1001.80px;top:542.52px;font-size:10.61px;line-height:10.61px;font-weight:normal;font-style:normal;color:#000;white-space:nowrap;transform-origin:0 0;transform:scaleX(1.1813);-webkit-text-stroke:0.15px #000;">00120010010000011641</div>
<div style="position:absolute;left:1001.80px;top:559.12px;font-size:10.61px;line-height:10.61px;font-weight:normal;font-style:normal;color:#000;white-space:nowrap;transform-origin:0 0;transform:scaleX(1.1600);-webkit-text-stroke:0.15px #000;">234567813</div>
<div style="position:absolute;left:1150.20px;top:482.42px;font-size:10.61px;line-height:10.61px;font-weight:normal;font-style:normal;color:#000;white-space:nowrap;transform-origin:0 0;transform:scaleX(0.9896);-webkit-text-stroke:0.15px #000;">LOGISTICA Y ALIMENTACION</div>
<div style="position:absolute;left:1150.20px;top:499.12px;font-size:10.61px;line-height:10.61px;font-weight:normal;font-style:normal;color:#000;white-space:nowrap;transform-origin:0 0;transform:scaleX(0.9457);-webkit-text-stroke:0.15px #000;">DE EVENTO</div>
<div style="position:absolute;left:1150.20px;top:542.52px;font-size:10.61px;line-height:10.61px;font-weight:normal;font-style:normal;color:#000;white-space:nowrap;transform-origin:0 0;transform:scaleX(0.9812);-webkit-text-stroke:0.15px #000;">TERAPISTA OCUPACIONAL</div>
<div style="position:absolute;left:319.60px;top:577.52px;font-size:10.61px;line-height:10.61px;font-weight:normal;font-style:normal;color:#000;white-space:nowrap;transform-origin:0 0;transform:scaleX(1.0937);-webkit-text-stroke:0.15px #000;">0.00</div>
<div style="position:absolute;left:392.60px;top:577.52px;font-size:10.61px;line-height:10.61px;font-weight:normal;font-style:normal;color:#000;white-space:nowrap;transform-origin:0 0;transform:scaleX(1.1082);-webkit-text-stroke:0.15px #000;">0.00</div>
<div style="position:absolute;left:476.80px;top:577.52px;font-size:10.61px;line-height:10.61px;font-weight:normal;font-style:normal;color:#000;white-space:nowrap;transform-origin:0 0;transform:scaleX(1.0840);-webkit-text-stroke:0.15px #000;">0.00</div>
<div style="position:absolute;left:549.60px;top:577.52px;font-size:10.61px;line-height:10.61px;font-weight:normal;font-style:normal;color:#000;white-space:nowrap;transform-origin:0 0;transform:scaleX(0.9374);-webkit-text-stroke:0.15px #000;">SIN. RET</div>
<div style="position:absolute;left:726.00px;top:577.52px;font-size:10.61px;line-height:10.61px;font-weight:normal;font-style:normal;color:#000;white-space:nowrap;transform-origin:0 0;transform:scaleX(1.0889);-webkit-text-stroke:0.15px #000;">0.00</div>
<div style="position:absolute;left:782.40px;top:577.52px;font-size:10.61px;line-height:10.61px;font-weight:normal;font-style:normal;color:#000;white-space:nowrap;transform-origin:0 0;transform:scaleX(1.1530);-webkit-text-stroke:0.15px #000;">332</div>
<div style="position:absolute;left:827.90px;top:577.52px;font-size:10.61px;line-height:10.61px;font-weight:normal;font-style:normal;color:#000;white-space:nowrap;transform-origin:0 0;transform:scaleX(1.0405);-webkit-text-stroke:0.15px #000;">0.00%</div>
<div style="position:absolute;left:885.30px;top:577.52px;font-size:10.61px;line-height:10.61px;font-weight:normal;font-style:normal;color:#000;white-space:nowrap;transform-origin:0 0;transform:scaleX(1.1373);-webkit-text-stroke:0.15px #000;">0.00</div>
<div style="position:absolute;left:950.60px;top:577.52px;font-size:10.61px;line-height:10.61px;font-weight:normal;font-style:normal;color:#000;white-space:nowrap;transform-origin:0 0;transform:scaleX(1.1324);-webkit-text-stroke:0.15px #000;">0.00</div>
<div style="position:absolute;left:319.60px;top:597.52px;font-size:10.61px;line-height:10.61px;font-weight:normal;font-style:normal;color:#000;white-space:nowrap;transform-origin:0 0;transform:scaleX(1.0937);-webkit-text-stroke:0.15px #000;">0.00</div>
<div style="position:absolute;left:392.60px;top:597.52px;font-size:10.61px;line-height:10.61px;font-weight:normal;font-style:normal;color:#000;white-space:nowrap;transform-origin:0 0;transform:scaleX(1.1082);-webkit-text-stroke:0.15px #000;">0.00</div>
<div style="position:absolute;left:476.80px;top:597.52px;font-size:10.61px;line-height:10.61px;font-weight:normal;font-style:normal;color:#000;white-space:nowrap;transform-origin:0 0;transform:scaleX(1.0840);-webkit-text-stroke:0.15px #000;">0.00</div>
<div style="position:absolute;left:549.60px;top:597.52px;font-size:10.61px;line-height:10.61px;font-weight:normal;font-style:normal;color:#000;white-space:nowrap;transform-origin:0 0;transform:scaleX(0.9374);-webkit-text-stroke:0.15px #000;">SIN. RET</div>
<div style="position:absolute;left:726.00px;top:597.52px;font-size:10.61px;line-height:10.61px;font-weight:normal;font-style:normal;color:#000;white-space:nowrap;transform-origin:0 0;transform:scaleX(1.0889);-webkit-text-stroke:0.15px #000;">0.00</div>
<div style="position:absolute;left:782.40px;top:597.52px;font-size:10.61px;line-height:10.61px;font-weight:normal;font-style:normal;color:#000;white-space:nowrap;transform-origin:0 0;transform:scaleX(1.1530);-webkit-text-stroke:0.15px #000;">332</div>
<div style="position:absolute;left:827.90px;top:597.52px;font-size:10.61px;line-height:10.61px;font-weight:normal;font-style:normal;color:#000;white-space:nowrap;transform-origin:0 0;transform:scaleX(1.0405);-webkit-text-stroke:0.15px #000;">0.00%</div>
<div style="position:absolute;left:885.30px;top:597.52px;font-size:10.61px;line-height:10.61px;font-weight:normal;font-style:normal;color:#000;white-space:nowrap;transform-origin:0 0;transform:scaleX(1.1373);-webkit-text-stroke:0.15px #000;">0.00</div>
<div style="position:absolute;left:950.60px;top:597.52px;font-size:10.61px;line-height:10.61px;font-weight:normal;font-style:normal;color:#000;white-space:nowrap;transform-origin:0 0;transform:scaleX(1.1324);-webkit-text-stroke:0.15px #000;">0.00</div>
<div style="position:absolute;left:319.60px;top:617.52px;font-size:10.61px;line-height:10.61px;font-weight:normal;font-style:normal;color:#000;white-space:nowrap;transform-origin:0 0;transform:scaleX(1.0937);-webkit-text-stroke:0.15px #000;">0.00</div>
<div style="position:absolute;left:392.60px;top:617.52px;font-size:10.61px;line-height:10.61px;font-weight:normal;font-style:normal;color:#000;white-space:nowrap;transform-origin:0 0;transform:scaleX(1.1082);-webkit-text-stroke:0.15px #000;">0.00</div>
<div style="position:absolute;left:476.80px;top:617.52px;font-size:10.61px;line-height:10.61px;font-weight:normal;font-style:normal;color:#000;white-space:nowrap;transform-origin:0 0;transform:scaleX(1.0840);-webkit-text-stroke:0.15px #000;">0.00</div>
<div style="position:absolute;left:549.60px;top:617.52px;font-size:10.61px;line-height:10.61px;font-weight:normal;font-style:normal;color:#000;white-space:nowrap;transform-origin:0 0;transform:scaleX(0.9374);-webkit-text-stroke:0.15px #000;">SIN. RET</div>
<div style="position:absolute;left:726.00px;top:617.52px;font-size:10.61px;line-height:10.61px;font-weight:normal;font-style:normal;color:#000;white-space:nowrap;transform-origin:0 0;transform:scaleX(1.0889);-webkit-text-stroke:0.15px #000;">0.00</div>
<div style="position:absolute;left:782.40px;top:617.52px;font-size:10.61px;line-height:10.61px;font-weight:normal;font-style:normal;color:#000;white-space:nowrap;transform-origin:0 0;transform:scaleX(1.1530);-webkit-text-stroke:0.15px #000;">332</div>
<div style="position:absolute;left:827.90px;top:617.52px;font-size:10.61px;line-height:10.61px;font-weight:normal;font-style:normal;color:#000;white-space:nowrap;transform-origin:0 0;transform:scaleX(1.0405);-webkit-text-stroke:0.15px #000;">0.00%</div>
<div style="position:absolute;left:885.30px;top:617.52px;font-size:10.61px;line-height:10.61px;font-weight:normal;font-style:normal;color:#000;white-space:nowrap;transform-origin:0 0;transform:scaleX(1.1373);-webkit-text-stroke:0.15px #000;">0.00</div>
<div style="position:absolute;left:950.60px;top:617.52px;font-size:10.61px;line-height:10.61px;font-weight:normal;font-style:normal;color:#000;white-space:nowrap;transform-origin:0 0;transform:scaleX(1.1324);-webkit-text-stroke:0.15px #000;">0.00</div>
<div style="position:absolute;left:319.60px;top:637.52px;font-size:10.61px;line-height:10.61px;font-weight:normal;font-style:normal;color:#000;white-space:nowrap;transform-origin:0 0;transform:scaleX(1.0937);-webkit-text-stroke:0.15px #000;">0.00</div>
<div style="position:absolute;left:392.60px;top:637.52px;font-size:10.61px;line-height:10.61px;font-weight:normal;font-style:normal;color:#000;white-space:nowrap;transform-origin:0 0;transform:scaleX(1.1082);-webkit-text-stroke:0.15px #000;">0.00</div>
<div style="position:absolute;left:476.80px;top:637.52px;font-size:10.61px;line-height:10.61px;font-weight:normal;font-style:normal;color:#000;white-space:nowrap;transform-origin:0 0;transform:scaleX(1.0840);-webkit-text-stroke:0.15px #000;">0.00</div>
<div style="position:absolute;left:549.60px;top:637.52px;font-size:10.61px;line-height:10.61px;font-weight:normal;font-style:normal;color:#000;white-space:nowrap;transform-origin:0 0;transform:scaleX(0.9374);-webkit-text-stroke:0.15px #000;">SIN. RET</div>
<div style="position:absolute;left:726.00px;top:637.52px;font-size:10.61px;line-height:10.61px;font-weight:normal;font-style:normal;color:#000;white-space:nowrap;transform-origin:0 0;transform:scaleX(1.0889);-webkit-text-stroke:0.15px #000;">0.00</div>
<div style="position:absolute;left:782.40px;top:637.52px;font-size:10.61px;line-height:10.61px;font-weight:normal;font-style:normal;color:#000;white-space:nowrap;transform-origin:0 0;transform:scaleX(1.1530);-webkit-text-stroke:0.15px #000;">332</div>
<div style="position:absolute;left:827.90px;top:637.52px;font-size:10.61px;line-height:10.61px;font-weight:normal;font-style:normal;color:#000;white-space:nowrap;transform-origin:0 0;transform:scaleX(1.0405);-webkit-text-stroke:0.15px #000;">0.00%</div>
<div style="position:absolute;left:885.30px;top:637.52px;font-size:10.61px;line-height:10.61px;font-weight:normal;font-style:normal;color:#000;white-space:nowrap;transform-origin:0 0;transform:scaleX(1.1373);-webkit-text-stroke:0.15px #000;">0.00</div>
<div style="position:absolute;left:950.60px;top:637.52px;font-size:10.61px;line-height:10.61px;font-weight:normal;font-style:normal;color:#000;white-space:nowrap;transform-origin:0 0;transform:scaleX(1.1324);-webkit-text-stroke:0.15px #000;">0.00</div>
<div style="position:absolute;left:319.60px;top:657.52px;font-size:10.61px;line-height:10.61px;font-weight:normal;font-style:normal;color:#000;white-space:nowrap;transform-origin:0 0;transform:scaleX(1.0937);-webkit-text-stroke:0.15px #000;">0.00</div>
<div style="position:absolute;left:392.60px;top:657.52px;font-size:10.61px;line-height:10.61px;font-weight:normal;font-style:normal;color:#000;white-space:nowrap;transform-origin:0 0;transform:scaleX(1.1082);-webkit-text-stroke:0.15px #000;">0.00</div>
<div style="position:absolute;left:476.80px;top:657.52px;font-size:10.61px;line-height:10.61px;font-weight:normal;font-style:normal;color:#000;white-space:nowrap;transform-origin:0 0;transform:scaleX(1.0840);-webkit-text-stroke:0.15px #000;">0.00</div>
<div style="position:absolute;left:549.60px;top:657.52px;font-size:10.61px;line-height:10.61px;font-weight:normal;font-style:normal;color:#000;white-space:nowrap;transform-origin:0 0;transform:scaleX(0.9374);-webkit-text-stroke:0.15px #000;">SIN. RET</div>
<div style="position:absolute;left:726.00px;top:657.52px;font-size:10.61px;line-height:10.61px;font-weight:normal;font-style:normal;color:#000;white-space:nowrap;transform-origin:0 0;transform:scaleX(1.0889);-webkit-text-stroke:0.15px #000;">0.00</div>
<div style="position:absolute;left:782.40px;top:657.52px;font-size:10.61px;line-height:10.61px;font-weight:normal;font-style:normal;color:#000;white-space:nowrap;transform-origin:0 0;transform:scaleX(1.1530);-webkit-text-stroke:0.15px #000;">332</div>
<div style="position:absolute;left:827.90px;top:657.52px;font-size:10.61px;line-height:10.61px;font-weight:normal;font-style:normal;color:#000;white-space:nowrap;transform-origin:0 0;transform:scaleX(1.0405);-webkit-text-stroke:0.15px #000;">0.00%</div>
<div style="position:absolute;left:885.30px;top:657.52px;font-size:10.61px;line-height:10.61px;font-weight:normal;font-style:normal;color:#000;white-space:nowrap;transform-origin:0 0;transform:scaleX(1.1373);-webkit-text-stroke:0.15px #000;">0.00</div>
<div style="position:absolute;left:950.60px;top:657.52px;font-size:10.61px;line-height:10.61px;font-weight:normal;font-style:normal;color:#000;white-space:nowrap;transform-origin:0 0;transform:scaleX(1.1324);-webkit-text-stroke:0.15px #000;">0.00</div>
<svg style="left:531px;top:471px" width="6" height="6" viewBox="0 0 6 6"><path d="M0 0h6L0 6z" fill="#0e8a2c"/></svg>
<svg style="left:531px;top:522px" width="6" height="6" viewBox="0 0 6 6"><path d="M0 0h6L0 6z" fill="#0e8a2c"/></svg>
<svg style="left:999px;top:471px" width="6" height="6" viewBox="0 0 6 6"><path d="M0 0h6L0 6z" fill="#0e8a2c"/></svg>
<svg style="left:999px;top:522px" width="6" height="6" viewBox="0 0 6 6"><path d="M0 0h6L0 6z" fill="#0e8a2c"/></svg>
<div style="position:absolute;left:1338px;top:203px;width:22px;height:475px;background:#e6e6e6;"></div>
<div style="position:absolute;left:1338px;top:223px;width:1px;height:455px;background:#a8a8a8;"></div>
<div style="position:absolute;left:1342px;top:222px;width:15px;height:441px;background:#dadada;"></div>
<div style="position:absolute;left:1342px;top:205px;width:15px;height:15px;background:#fff;border:1px solid #8c8c8c;"></div>
<svg style="left:1345px;top:210px" width="9" height="5" viewBox="0 0 9 5"><path d="M0 5h9L4.5 0z" fill="#777"/></svg>
<div style="position:absolute;left:1342px;top:663px;width:15px;height:15px;background:#fff;border:1px solid #8c8c8c;"></div>
<svg style="left:1345px;top:668px" width="9" height="5" viewBox="0 0 9 5"><path d="M0 0h9L4.5 5z" fill="#777"/></svg>
<div style="position:absolute;left:1342px;top:434px;width:15px;height:79px;background:#fff;border:1px solid #8c8c8c;"></div>
<div style="position:absolute;left:0px;top:678px;width:1360px;height:28px;background:#e6e6e6;"></div>
<div style="position:absolute;left:0px;top:678px;width:1338px;height:1px;background:#c6c6c6;"></div>
<svg style="left:26px;top:687px" width="6" height="9" viewBox="0 0 6 9"><path d="M6 0v9L0 4.5z" fill="#217346"/></svg>
<svg style="left:55px;top:687px" width="6" height="9" viewBox="0 0 6 9"><path d="M0 0v9l6-4.5z" fill="#b0b0b0"/></svg>
<div style="position:absolute;left:81px;top:695px;width:2px;height:2px;background:#217346;"></div>
<div style="position:absolute;left:85px;top:695px;width:2px;height:2px;background:#217346;"></div>
<div style="position:absolute;left:89px;top:695px;width:2px;height:2px;background:#217346;"></div>
<div style="position:absolute;left:100px;top:682px;width:1px;height:20px;background:#b8b8b8;"></div>
<div style="position:absolute;left:192px;top:682px;width:1px;height:20px;background:#b8b8b8;"></div>
<div style="position:absolute;left:301px;top:682px;width:1px;height:20px;background:#b8b8b8;"></div>
<div style="position:absolute;left:433px;top:682px;width:1px;height:20px;background:#b8b8b8;"></div>
<div style="position:absolute;left:113.70px;top:685.92px;font-size:12.50px;line-height:12.50px;font-weight:normal;font-style:normal;color:#444;white-space:nowrap;transform-origin:0 0;transform:scaleX(0.9548);">JULIO 2022</div>
<div style="position:absolute;left:205.00px;top:685.92px;font-size:12.50px;line-height:12.50px;font-weight:normal;font-style:normal;color:#444;white-space:nowrap;transform-origin:0 0;transform:scaleX(0.9760);">AGOSTO 2022</div>
<div style="position:absolute;left:315.00px;top:685.92px;font-size:12.50px;line-height:12.50px;font-weight:normal;font-style:normal;color:#444;white-space:nowrap;transform-origin:0 0;transform:scaleX(0.9254);">SEPTIEMBRE 2022</div>
<div style="position:absolute;left:446.50px;top:685.92px;font-size:12.50px;line-height:12.50px;font-weight:normal;font-style:normal;color:#444;white-space:nowrap;transform-origin:0 0;transform:scaleX(0.9415);">OCTUBRE 2022</div>
<div style="position:absolute;left:547px;top:678px;width:131px;height:25px;background:#fff;"></div>
<div style="position:absolute;left:547px;top:700px;width:131px;height:3px;background:#217346;"></div>
<div style="position:absolute;left:559.20px;top:685.82px;font-size:12.50px;line-height:12.50px;font-weight:bold;font-style:normal;color:#217346;white-space:nowrap;transform-origin:0 0;transform:scaleX(0.9916);">NOVIEMBRE 2022</div>
<svg style="left:710px;top:684px" width="17" height="17" viewBox="0 0 17 17"><circle cx="8.5" cy="8.5" r="7.8" fill="none" stroke="#6f6f6f" stroke-width="1.2"/><path d="M8.5 4v9M4 8.5h9" stroke="#6f6f6f" stroke-width="1.6"/></svg>
<div style="position:absolute;left:816px;top:687px;width:2px;height:2px;background:#a0a0a0;"></div>
<div style="position:absolute;left:816px;top:691px;width:2px;height:2px;background:#a0a0a0;"></div>
<div style="position:absolute;left:816px;top:695px;width:2px;height:2px;background:#a0a0a0;"></div>
<div style="position:absolute;left:848px;top:685px;width:473px;height:14px;background:#dadada;"></div>
<div style="position:absolute;left:833px;top:685px;width:15px;height:15px;background:#fff;border:1px solid #8c8c8c;"></div>
<svg style="left:837px;top:688px" width="5" height="9" viewBox="0 0 5 9"><path d="M5 0v9L0 4.5z" fill="#777"/></svg>
<div style="position:absolute;left:1000px;top:685px;width:321px;height:15px;background:#fff;border:1px solid #8c8c8c;"></div>
<div style="position:absolute;left:1321px;top:685px;width:15px;height:15px;background:#fff;border:1px solid #8c8c8c;"></div>
<svg style="left:1326px;top:688px" width="5" height="9" viewBox="0 0 5 9"><path d="M0 0v9l5-4.5z" fill="#777"/></svg>
<div style="position:absolute;left:0px;top:706px;width:1360px;height:22px;background:#f3f3f3;"></div>
<div style="position:absolute;left:0px;top:706px;width:1360px;height:1px;background:#dedede;"></div>
<div style="position:absolute;left:8.00px;top:711.29px;font-size:12.06px;line-height:12.06px;font-weight:normal;font-style:normal;color:#262626;white-space:nowrap;transform-origin:0 0;transform:scaleX(0.8829);">Listo</div>
<svg style="left:73px;top:710px" width="15" height="15" viewBox="0 0 15 15"><path d="M7 1.5A6 6 0 1 0 12 9" fill="none" stroke="#666" stroke-width="1.2" stroke-dasharray="2 1.2"/><path d="M7 0v6l2 1" fill="none" stroke="#666" stroke-width="1.1"/><path d="M8.5 8.5l6 6M14.5 8.5l-6 6" stroke="#555" stroke-width="1.6"/></svg>
<div style="position:absolute;left:94.00px;top:711.29px;font-size:12.06px;line-height:12.06px;font-weight:normal;font-style:normal;color:#262626;white-space:nowrap;transform-origin:0 0;transform:scaleX(0.9426);">Accesibilidad: es necesario investigar</div>
<div style="position:absolute;left:1060px;top:707px;width:40px;height:21px;background:#c6c6c6;"></div>
<svg style="left:1073px;top:710px" width="13" height="13" viewBox="0 0 13 13"><rect x="0.75" y="0.75" width="11.5" height="11.5" fill="none" stroke="#666" stroke-width="1.5"/><path d="M4.5 0.5v12M8.5 0.5v12M0.5 4.5h12M0.5 8.5h12" stroke="#777" stroke-width="1"/></svg>
<svg style="left:1113px;top:710px" width="14" height="13" viewBox="0 0 14 13"><rect x="0.75" y="0.75" width="12.5" height="11.5" fill="none" stroke="#666" stroke-width="1.5"/><rect x="3.75" y="2.75" width="6.5" height="7.5" fill="none" stroke="#666" stroke-width="1.2"/><path d="M5 5h4M5 6.8h4M5 8.6h4" stroke="#777" stroke-width="0.9"/></svg>
<svg style="left:1153px;top:710px" width="14" height="13" viewBox="0 0 14 13"><rect x="0.75" y="0.75" width="12.5" height="11.5" fill="none" stroke="#666" stroke-width="1.5"/><path d="M0.5 7.5h7.5V0.5M4.5 0.5v7" fill="none" stroke="#666" stroke-width="1.2"/></svg>
<div style="position:absolute;left:1186px;top:717px;width:8px;height:1px;background:#555;"></div>
<div style="position:absolute;left:1199px;top:717px;width:100px;height:1px;background:#5a5a5a;"></div>
<div style="position:absolute;left:1247px;top:710px;width:5px;height:13px;background:#555;"></div>
<div style="position:absolute;left:1302px;top:717px;width:9px;height:1px;background:#555;"></div>
<div style="position:absolute;left:1306px;top:713px;width:1px;height:9px;background:#555;"></div>
<div style="position:absolute;left:1325.00px;top:711.29px;font-size:12.06px;line-height:12.06px;font-weight:normal;font-style:normal;color:#333;white-space:nowrap;transform-origin:0 0;transform:scaleX(0.8751);">100%</div>
<div style="position:absolute;left:0px;top:728px;width:1360px;height:40px;background:#101010;"></div>
<svg style="left:16px;top:740px" width="17" height="16" viewBox="0 0 17 16"><g fill="#fff"><path d="M0 2.2l7-1v6.6H0z"/><path d="M8 1.1L17 0v7.8H8z"/><path d="M0 8.8h7v6.6l-7-1z"/><path d="M8 8.8h9V16l-9-1.2z"/></g></svg>
<svg style="left:63px;top:739px" width="19" height="19" viewBox="0 0 19 19"><circle cx="11.5" cy="7" r="5.8" fill="none" stroke="#fff" stroke-width="1.3"/><path d="M7.5 11L1 17.5" stroke="#fff" stroke-width="1.4"/></svg>
<svg style="left:111px;top:736px" width="24" height="24" viewBox="0 0 24 24"><defs><linearGradient id="eg" x1="0" y1="0.2" x2="1" y2="0.6"><stop offset="0" stop-color="#33b9f2"/><stop offset="0.55" stop-color="#2fc4b8"/><stop offset="1" stop-color="#62dc55"/></linearGradient></defs><circle cx="12" cy="12" r="12" fill="url(#eg)"/><path d="M0.2 12.5C0.5 8.5 4 6.2 8.5 6.2 12.5 6.2 14.5 8 14.5 9.8L9 13.5C7.5 16 8 20.5 10.5 23.8 4.5 23.3 0 18.5 0.2 12.5z" fill="#1c8ee3"/><path d="M7 17C7 13 9.5 10.5 12 10.5 14 10.5 15 12 15.5 13.5 16.5 16.5 19 17.5 23.8 16.8 21.5 21.5 16.5 24 12 24 9 24 7 21 7 17z" fill="#0f5ba8"/><path d="M9.4 12.8C9.4 10.8 10.8 9.6 12.5 9.6 14.2 9.6 15 11 14.6 12.6 15.2 15 18 16.3 21.5 16.3 22.6 16.3 23.3 16.1 23.6 15.8 22.4 18.4 19.5 19.2 17 19 13 18.6 9.4 16 9.4 12.8z" fill="#101010"/></svg>
<svg style="left:160px;top:736px" width="24" height="24" viewBox="0 0 24 24"><circle cx="12" cy="12" r="11.5" fill="#34a853"/><path d="M12 0.5A11.5 11.5 0 0 1 22 6.3H12a5.8 5.8 0 0 0-5 2.9L2 6.5A11.5 11.5 0 0 1 12 .5z" fill="#ea4335"/><path d="M22 6.3A11.5 11.5 0 0 1 12 23.5l5-8.5a5.8 5.8 0 0 0 0-8.7z" fill="#fbbc05"/><circle cx="12" cy="12" r="5.4" fill="#fff"/><circle cx="12" cy="12" r="4.3" fill="#4285f4"/></svg>
<svg style="left:209px;top:736px" width="25" height="24" viewBox="0 0 25 24"><rect x="6" y="1" width="18" height="22" rx="2" fill="#2b7cd3"/><rect x="6" y="8" width="18" height="8" fill="#185abd"/><rect x="6" y="16" width="18" height="7" rx="1" fill="#103f91"/><rect x="0" y="5" width="13" height="13" rx="1.5" fill="#185abd"/><text x="1.5" y="15.5" font-size="10.5" font-weight="bold" fill="#fff" font-family="Liberation Sans">W</text></svg>
<svg style="left:258px;top:738px" width="23" height="20" viewBox="0 0 23 20"><path d="M0 2h8l2 2h13v16H0z" fill="#e8a92d"/><rect x="0" y="6" width="23" height="14" fill="#ffd35b"/><rect x="7" y="13" width="9" height="7" fill="#1e88d6"/><rect x="9" y="15" width="5" height="5" fill="#ffd35b"/></svg>
<div style="position:absolute;left:295px;top:728px;width:48px;height:40px;background:#2e2e2e;"></div>
<svg style="left:306px;top:736px" width="25" height="24" viewBox="0 0 25 24"><rect x="6" y="1" width="18" height="22" rx="2" fill="#21a366"/><rect x="15" y="1" width="9" height="8" fill="#33c481"/><rect x="6" y="9" width="18" height="7" fill="#107c41"/><rect x="6" y="16" width="18" height="7" fill="#185c37"/><rect x="0" y="5" width="13" height="13" rx="1.5" fill="#107c41"/><text x="2.5" y="15.5" font-size="10.5" font-weight="bold" fill="#fff" font-family="Liberation Sans">X</text></svg>
<svg style="left:355px;top:736px" width="24" height="24" viewBox="0 0 24 24"><defs><radialGradient id="ff" cx="0.6" cy="0.2" r="0.9"><stop offset="0" stop-color="#ffe747"/><stop offset="0.4" stop-color="#ff980e"/><stop offset="1" stop-color="#e31587"/></radialGradient></defs><circle cx="12" cy="13" r="11" fill="url(#ff)"/><path d="M14 2c5 1 9 5 10 10L20 8z" fill="#ffbd2e"/><path d="M3 6l3-3 1 4z" fill="#ff980e"/><circle cx="12" cy="13.5" r="6" fill="#7542e5"/><path d="M3 10c2 4 6 6 10 5" stroke="#ff5c2b" stroke-width="3" fill="none"/></svg>
<svg style="left:404px;top:736px" width="24" height="24" viewBox="0 0 24 24"><circle cx="12" cy="12" r="11.5" fill="#34a853"/><path d="M12 0.5A11.5 11.5 0 0 1 22 6.3H12a5.8 5.8 0 0 0-5 2.9L2 6.5A11.5 11.5 0 0 1 12 .5z" fill="#ea4335"/><path d="M22 6.3A11.5 11.5 0 0 1 12 23.5l5-8.5a5.8 5.8 0 0 0 0-8.7z" fill="#fbbc05"/><circle cx="12" cy="12" r="5.4" fill="#fff"/><circle cx="12" cy="12" r="4.3" fill="#4285f4"/></svg>
<svg style="left:415px;top:746px" width="14" height="15" viewBox="0 0 14 15"><circle cx="7" cy="8" r="7" fill="#d8d8d8"/><path d="M2 5c2-2 8-2 10 0l-1 3H3z" fill="#444"/><circle cx="4.5" cy="8" r="1.4" fill="#333"/><circle cx="9.5" cy="8" r="1.4" fill="#333"/><path d="M4 12h6l-1 2H5z" fill="#777"/></svg>
<svg style="left:453px;top:736px" width="26" height="24" viewBox="0 0 26 24"><path d="M12 5C5 5 1 9 1 14s4 7 8 7c2 0 2-2 3-3 1-1 3 0 5-1 3-1 4-3 4-6 0-4-4-6-9-6z" fill="#bfe0f2"/><circle cx="11" cy="15" r="1.2" fill="#101010"/><circle cx="6" cy="11" r="2" fill="#e94b3c"/><circle cx="10" cy="7" r="2" fill="#4aa3f0"/><circle cx="15" cy="8" r="2" fill="#50b848"/><circle cx="8" cy="16" r="2" fill="#f5c242"/><path d="M25 0l-11 17" stroke="#c9892f" stroke-width="2.5"/><path d="M14 17l-2 5 4-3z" fill="#555"/></svg>
<svg style="left:502px;top:736px" width="23" height="24" viewBox="0 0 23 24"><rect x="0" y="0" width="23" height="24" rx="3" fill="#b30b00"/><path d="M5 18c3-5 6-11 6-14 0-2-2-2-2 0 0 4 5 10 9 10 2 0 2-2 0-2-4 0-10 3-13 6z" fill="none" stroke="#fff" stroke-width="1.4"/></svg>
<div style="position:absolute;left:201px;top:766px;width:40px;height:2px;background:#76b9ed;"></div>
<div style="position:absolute;left:250px;top:766px;width:39px;height:2px;background:#76b9ed;"></div>
<div style="position:absolute;left:295px;top:766px;width:48px;height:2px;background:#76b9ed;"></div>
<div style="position:absolute;left:348px;top:766px;width:40px;height:2px;background:#76b9ed;"></div>
<div style="position:absolute;left:397px;top:766px;width:40px;height:2px;background:#76b9ed;"></div>
<div style="position:absolute;left:446px;top:766px;width:40px;height:2px;background:#76b9ed;"></div>
<div style="position:absolute;left:495px;top:766px;width:40px;height:2px;background:#76b9ed;"></div>
<div style="position:absolute;left:289px;top:766px;width:6px;height:2px;background:#4a7fa8;"></div>
<svg style="left:1115px;top:744px" width="14" height="8" viewBox="0 0 14 8"><path d="M1 7l6-6 6 6" fill="none" stroke="#fff" stroke-width="1.2"/></svg>
<svg style="left:1140px;top:740px" width="15" height="16" viewBox="0 0 15 16"><g fill="none" stroke="#fff" stroke-width="1.1"><rect x="1" y="4" width="9" height="8" rx="2"/><path d="M10 7l4-2v6l-4-2"/><path d="M3 1.5h5M3 14.5h5"/></g></svg>
<svg style="left:1162px;top:740px" width="17" height="16" viewBox="0 0 17 16"><g fill="none" stroke="#fff" stroke-width="1.1"><rect x="4.5" y="1.5" width="12" height="9"/><path d="M10.5 10.5v3M7 14.5h7"/><rect x="0.5" y="2.5" width="5" height="4"/><path d="M3 6.5v9"/></g></svg>
<svg style="left:1185px;top:740px" width="17" height="16" viewBox="0 0 17 16"><g fill="none" stroke="#fff" stroke-width="1.1"><path d="M1 5.5h3l4-4v13l-4-4H1z"/><path d="M11 5a4 4 0 0 1 0 6M13.5 3a7 7 0 0 1 0 10M15.5 1.5a9.5 9.5 0 0 1 0 13" stroke="#aaa"/></g></svg>
<div style="position:absolute;left:1214.50px;top:742.03px;font-size:11.77px;line-height:11.77px;font-weight:normal;font-style:normal;color:#ffffff;white-space:nowrap;transform-origin:0 0;transform:scaleX(0.7984);">ESP</div>
<div style="position:absolute;left:1261.00px;top:733.03px;font-size:11.77px;line-height:11.77px;font-weight:normal;font-style:normal;color:#ffffff;white-space:nowrap;transform-origin:0 0;transform:scaleX(0.8994);">16:53</div>
<div style="position:absolute;left:1249.50px;top:750.83px;font-size:11.77px;line-height:11.77px;font-weight:normal;font-style:normal;color:#ffffff;white-space:nowrap;transform-origin:0 0;transform:scaleX(0.9734);">1/12/2022</div>
<svg style="left:1318px;top:739px" width="18" height="17" viewBox="0 0 18 17"><path d="M0.5 0.5h16v11H10.5l-3 3-3-3H0.5z" fill="none" stroke="#fff" stroke-width="1.1"/></svg>
<div style="position:absolute;left:1354px;top:728px;width:1px;height:40px;background:#555;"></div>
</div></body></html>
